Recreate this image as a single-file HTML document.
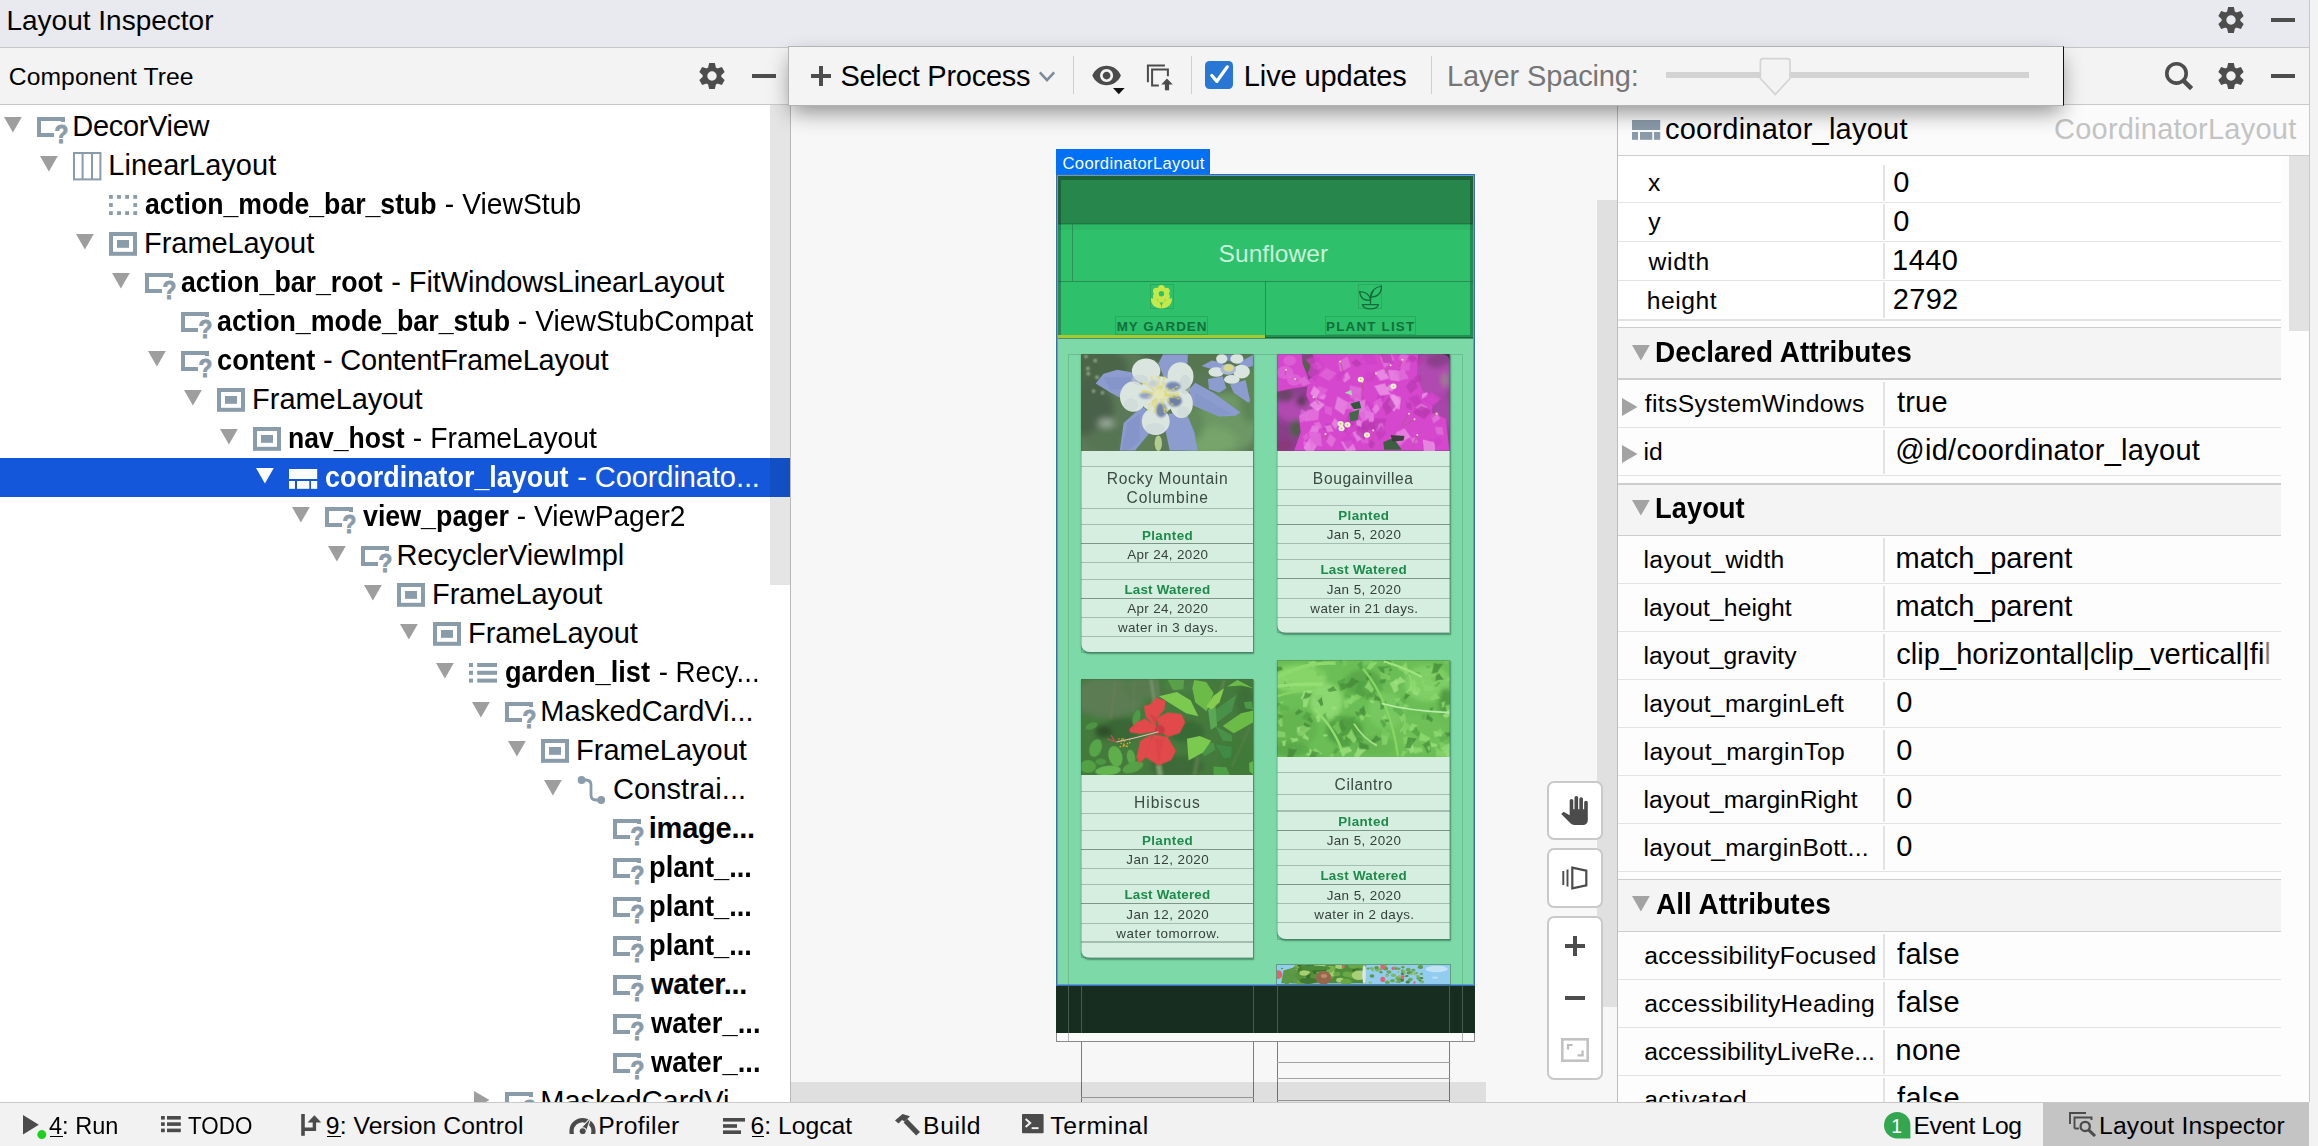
<!DOCTYPE html>
<html><head><meta charset="utf-8"><title>Layout Inspector</title>
<style>
html,body{margin:0;padding:0;}
body{width:2318px;height:1146px;position:relative;overflow:hidden;background:#f7f7f7;font-family:"Liberation Sans", sans-serif;}
div,span,svg{position:absolute;}
span{white-space:pre;line-height:1;}
</style></head><body>
<div style="left:0px;top:0px;width:2318px;height:47px;background:#e8eaef;"></div>
<div style="left:0px;top:47px;width:2318px;height:1px;background:#c6c6c6;"></div>
<span style="left:6.45px;top:7px;font-size:28px;color:#000;">Layout Inspector</span>
<svg style="left:2217px;top:6px;" width="28" height="28" viewBox="0 0 28 28"><g transform="translate(14,14)" fill="#4d4d4d"><path d="M-3.9 -8.4 L-2.8 -13 H2.8 L3.9 -8.4 Z" transform="rotate(0)"/><path d="M-3.9 -8.4 L-2.8 -13 H2.8 L3.9 -8.4 Z" transform="rotate(60)"/><path d="M-3.9 -8.4 L-2.8 -13 H2.8 L3.9 -8.4 Z" transform="rotate(120)"/><path d="M-3.9 -8.4 L-2.8 -13 H2.8 L3.9 -8.4 Z" transform="rotate(180)"/><path d="M-3.9 -8.4 L-2.8 -13 H2.8 L3.9 -8.4 Z" transform="rotate(240)"/><path d="M-3.9 -8.4 L-2.8 -13 H2.8 L3.9 -8.4 Z" transform="rotate(300)"/><circle r="7.05" fill="none" stroke="#4d4d4d" stroke-width="4.7"/></g></svg>
<div style="left:2271px;top:18px;width:24px;height:4px;background:#4d4d4d;"></div>
<div style="left:0px;top:48px;width:2318px;height:56px;background:#f3f3f3;"></div>
<div style="left:0px;top:104px;width:2318px;height:1px;background:#c9c9c9;"></div>
<span style="left:8.75px;top:65px;font-size:24.7px;color:#000;letter-spacing:0.074px;">Component Tree</span>
<svg style="left:697.5px;top:62px;" width="28" height="28" viewBox="0 0 28 28"><g transform="translate(14,14)" fill="#4d4d4d"><path d="M-3.9 -8.4 L-2.8 -13 H2.8 L3.9 -8.4 Z" transform="rotate(0)"/><path d="M-3.9 -8.4 L-2.8 -13 H2.8 L3.9 -8.4 Z" transform="rotate(60)"/><path d="M-3.9 -8.4 L-2.8 -13 H2.8 L3.9 -8.4 Z" transform="rotate(120)"/><path d="M-3.9 -8.4 L-2.8 -13 H2.8 L3.9 -8.4 Z" transform="rotate(180)"/><path d="M-3.9 -8.4 L-2.8 -13 H2.8 L3.9 -8.4 Z" transform="rotate(240)"/><path d="M-3.9 -8.4 L-2.8 -13 H2.8 L3.9 -8.4 Z" transform="rotate(300)"/><circle r="7.05" fill="none" stroke="#4d4d4d" stroke-width="4.7"/></g></svg>
<div style="left:751.5px;top:74px;width:24px;height:4px;background:#4d4d4d;"></div>
<svg style="left:2162px;top:60px;" width="34" height="34" viewBox="0 0 34 34"><circle cx="14.5" cy="13.4" r="9.7" fill="none" stroke="#4d4d4d" stroke-width="3.6"/><path d="M21.2 20.4 L29.6 28.6" stroke="#4d4d4d" stroke-width="4.6"/></svg>
<svg style="left:2217px;top:62px;" width="28" height="28" viewBox="0 0 28 28"><g transform="translate(14,14)" fill="#4d4d4d"><path d="M-3.9 -8.4 L-2.8 -13 H2.8 L3.9 -8.4 Z" transform="rotate(0)"/><path d="M-3.9 -8.4 L-2.8 -13 H2.8 L3.9 -8.4 Z" transform="rotate(60)"/><path d="M-3.9 -8.4 L-2.8 -13 H2.8 L3.9 -8.4 Z" transform="rotate(120)"/><path d="M-3.9 -8.4 L-2.8 -13 H2.8 L3.9 -8.4 Z" transform="rotate(180)"/><path d="M-3.9 -8.4 L-2.8 -13 H2.8 L3.9 -8.4 Z" transform="rotate(240)"/><path d="M-3.9 -8.4 L-2.8 -13 H2.8 L3.9 -8.4 Z" transform="rotate(300)"/><circle r="7.05" fill="none" stroke="#4d4d4d" stroke-width="4.7"/></g></svg>
<div style="left:2271px;top:74px;width:24px;height:4px;background:#4d4d4d;"></div>
<div style="left:0px;top:105px;width:790px;height:997px;background:#ffffff;"></div>
<div style="left:0;top:105px;width:790px;height:997px;overflow:hidden">
<svg style="left:4px;top:12px;" width="18" height="16" viewBox="0 0 18 16"><path d="M0 0 H17.8 L8.9 15.5 Z" fill="#9e9e9e"/></svg>
<svg style="left:37px;top:12px;" width="32" height="28" viewBox="0 0 32 28"><path d="M26 5 V2 H2 V18 H17" fill="none" stroke="#8a9ba9" stroke-width="4"/><text transform="translate(17.4,25.7) scale(0.9,1)" font-family='"Liberation Sans", sans-serif' font-weight="700" font-size="25.2" fill="#8a9ba9" stroke="#8a9ba9" stroke-width="0.9">?</text></svg>
<span style="left:72.37px;top:7px;font-size:29px;color:#000000;letter-spacing:-0.331px;">DecorView</span>
<svg style="left:40px;top:51px;" width="18" height="16" viewBox="0 0 18 16"><path d="M0 0 H17.8 L8.9 15.5 Z" fill="#9e9e9e"/></svg>
<svg style="left:72.8px;top:47px;" width="30" height="30" viewBox="0 0 30 30"><rect x="1" y="1" width="26.4" height="26.4" fill="none" stroke="#8a9ba9" stroke-width="2"/><path d="M9.6 1 V27 M19 1 V27" stroke="#8a9ba9" stroke-width="2"/></svg>
<span style="left:108.32px;top:46px;font-size:29px;color:#000000;letter-spacing:0.019px;">LinearLayout</span>
<svg style="left:109px;top:90px;" width="30" height="22" viewBox="0 0 30 22"><g fill="#8a9ba9"><rect x="0.0" y="0.0" width="3.8" height="3.8"/><rect x="8.1" y="0.0" width="3.8" height="3.8"/><rect x="16.2" y="0.0" width="3.8" height="3.8"/><rect x="24.3" y="0.0" width="3.8" height="3.8"/><rect x="0.0" y="8.1" width="3.8" height="3.8"/><rect x="24.3" y="8.1" width="3.8" height="3.8"/><rect x="0.0" y="16.2" width="3.8" height="3.8"/><rect x="8.1" y="16.2" width="3.8" height="3.8"/><rect x="16.2" y="16.2" width="3.8" height="3.8"/><rect x="24.3" y="16.2" width="3.8" height="3.8"/></g></svg>
<span style="left:145.47px;top:85px;font-size:29px;color:#000000;font-weight:700;transform:scaleX(0.9185);transform-origin:0 0;">action_mode_bar_stub</span>
<span style="left:436.60px;top:85px;font-size:29px;color:#000000;transform:scaleX(0.9758);transform-origin:0 0;"> - ViewStub</span>
<svg style="left:76px;top:129px;" width="18" height="16" viewBox="0 0 18 16"><path d="M0 0 H17.8 L8.9 15.5 Z" fill="#9e9e9e"/></svg>
<svg style="left:109px;top:127.4px;" width="30" height="26" viewBox="0 0 30 26"><rect x="2" y="2" width="24" height="19.8" fill="none" stroke="#8a9ba9" stroke-width="4"/><rect x="8" y="8" width="12" height="7.8" fill="#8a9ba9"/></svg>
<span style="left:144.12px;top:124px;font-size:29px;color:#000000;letter-spacing:-0.077px;">FrameLayout</span>
<svg style="left:112px;top:168px;" width="18" height="16" viewBox="0 0 18 16"><path d="M0 0 H17.8 L8.9 15.5 Z" fill="#9e9e9e"/></svg>
<svg style="left:145px;top:168px;" width="32" height="28" viewBox="0 0 32 28"><path d="M26 5 V2 H2 V18 H17" fill="none" stroke="#8a9ba9" stroke-width="4"/><text transform="translate(17.4,25.7) scale(0.9,1)" font-family='"Liberation Sans", sans-serif' font-weight="700" font-size="25.2" fill="#8a9ba9" stroke="#8a9ba9" stroke-width="0.9">?</text></svg>
<span style="left:181.42px;top:163px;font-size:29px;color:#000000;font-weight:700;transform:scaleX(0.9199);transform-origin:0 0;">action_bar_root</span>
<span style="left:383.30px;top:163px;font-size:29px;color:#000000;letter-spacing:-0.101px;"> - FitWindowsLinearLayout</span>
<svg style="left:181px;top:207px;" width="32" height="28" viewBox="0 0 32 28"><path d="M26 5 V2 H2 V18 H17" fill="none" stroke="#8a9ba9" stroke-width="4"/><text transform="translate(17.4,25.7) scale(0.9,1)" font-family='"Liberation Sans", sans-serif' font-weight="700" font-size="25.2" fill="#8a9ba9" stroke="#8a9ba9" stroke-width="0.9">?</text></svg>
<span style="left:217.02px;top:202px;font-size:29px;color:#000000;font-weight:700;transform:scaleX(0.9231);transform-origin:0 0;">action_mode_bar_stub</span>
<span style="left:509.60px;top:202px;font-size:29px;color:#000000;transform:scaleX(0.9759);transform-origin:0 0;"> - ViewStubCompat</span>
<svg style="left:148px;top:246px;" width="18" height="16" viewBox="0 0 18 16"><path d="M0 0 H17.8 L8.9 15.5 Z" fill="#9e9e9e"/></svg>
<svg style="left:181px;top:246px;" width="32" height="28" viewBox="0 0 32 28"><path d="M26 5 V2 H2 V18 H17" fill="none" stroke="#8a9ba9" stroke-width="4"/><text transform="translate(17.4,25.7) scale(0.9,1)" font-family='"Liberation Sans", sans-serif' font-weight="700" font-size="25.2" fill="#8a9ba9" stroke="#8a9ba9" stroke-width="0.9">?</text></svg>
<span style="left:216.74px;top:241px;font-size:29px;color:#000000;font-weight:700;transform:scaleX(0.9387);transform-origin:0 0;">content</span>
<span style="left:315.30px;top:241px;font-size:29px;color:#000000;letter-spacing:-0.250px;"> - ContentFrameLayout</span>
<svg style="left:184px;top:285px;" width="18" height="16" viewBox="0 0 18 16"><path d="M0 0 H17.8 L8.9 15.5 Z" fill="#9e9e9e"/></svg>
<svg style="left:217px;top:283.4px;" width="30" height="26" viewBox="0 0 30 26"><rect x="2" y="2" width="24" height="19.8" fill="none" stroke="#8a9ba9" stroke-width="4"/><rect x="8" y="8" width="12" height="7.8" fill="#8a9ba9"/></svg>
<span style="left:252.12px;top:280px;font-size:29px;color:#000000;letter-spacing:-0.047px;">FrameLayout</span>
<svg style="left:220px;top:324px;" width="18" height="16" viewBox="0 0 18 16"><path d="M0 0 H17.8 L8.9 15.5 Z" fill="#9e9e9e"/></svg>
<svg style="left:253px;top:322.4px;" width="30" height="26" viewBox="0 0 30 26"><rect x="2" y="2" width="24" height="19.8" fill="none" stroke="#8a9ba9" stroke-width="4"/><rect x="8" y="8" width="12" height="7.8" fill="#8a9ba9"/></svg>
<span style="left:288.05px;top:319px;font-size:29px;color:#000000;font-weight:700;transform:scaleX(0.9155);transform-origin:0 0;">nav_host</span>
<span style="left:404.90px;top:319px;font-size:29px;color:#000000;transform:scaleX(0.9764);transform-origin:0 0;"> - FrameLayout</span>
<div style="left:0px;top:353px;width:790px;height:38.8px;background:#1557db;"></div>
<svg style="left:256px;top:363px;" width="18" height="16" viewBox="0 0 18 16"><path d="M0 0 H17.8 L8.9 15.5 Z" fill="#ffffff"/></svg>
<svg style="left:289px;top:364px;" width="30" height="22" viewBox="0 0 30 22"><g fill="#ffffff"><rect x="0" y="0" width="28.2" height="10"/><rect x="0" y="12" width="6" height="7.8"/><rect x="8" y="12" width="12.3" height="7.8"/><rect x="22" y="12" width="6.2" height="7.8"/></g></svg>
<span style="left:325.45px;top:358px;font-size:29px;color:#ffffff;font-weight:700;transform:scaleX(0.9274);transform-origin:0 0;">coordinator_layout</span>
<span style="left:569.30px;top:358px;font-size:29px;color:#ffffff;letter-spacing:-0.079px;"> - Coordinato...</span>
<svg style="left:292px;top:402px;" width="18" height="16" viewBox="0 0 18 16"><path d="M0 0 H17.8 L8.9 15.5 Z" fill="#9e9e9e"/></svg>
<svg style="left:325px;top:402px;" width="32" height="28" viewBox="0 0 32 28"><path d="M26 5 V2 H2 V18 H17" fill="none" stroke="#8a9ba9" stroke-width="4"/><text transform="translate(17.4,25.7) scale(0.9,1)" font-family='"Liberation Sans", sans-serif' font-weight="700" font-size="25.2" fill="#8a9ba9" stroke="#8a9ba9" stroke-width="0.9">?</text></svg>
<span style="left:362.70px;top:397px;font-size:29px;color:#000000;font-weight:700;transform:scaleX(0.9242);transform-origin:0 0;">view_pager</span>
<span style="left:508.90px;top:397px;font-size:29px;color:#000000;transform:scaleX(0.9719);transform-origin:0 0;"> - ViewPager2</span>
<svg style="left:328px;top:441px;" width="18" height="16" viewBox="0 0 18 16"><path d="M0 0 H17.8 L8.9 15.5 Z" fill="#9e9e9e"/></svg>
<svg style="left:361px;top:441px;" width="32" height="28" viewBox="0 0 32 28"><path d="M26 5 V2 H2 V18 H17" fill="none" stroke="#8a9ba9" stroke-width="4"/><text transform="translate(17.4,25.7) scale(0.9,1)" font-family='"Liberation Sans", sans-serif' font-weight="700" font-size="25.2" fill="#8a9ba9" stroke="#8a9ba9" stroke-width="0.9">?</text></svg>
<span style="left:396.42px;top:436px;font-size:29px;color:#000000;letter-spacing:-0.140px;">RecyclerViewImpl</span>
<svg style="left:364px;top:480px;" width="18" height="16" viewBox="0 0 18 16"><path d="M0 0 H17.8 L8.9 15.5 Z" fill="#9e9e9e"/></svg>
<svg style="left:397px;top:478.4px;" width="30" height="26" viewBox="0 0 30 26"><rect x="2" y="2" width="24" height="19.8" fill="none" stroke="#8a9ba9" stroke-width="4"/><rect x="8" y="8" width="12" height="7.8" fill="#8a9ba9"/></svg>
<span style="left:432.12px;top:475px;font-size:29px;color:#000000;letter-spacing:-0.077px;">FrameLayout</span>
<svg style="left:400px;top:519px;" width="18" height="16" viewBox="0 0 18 16"><path d="M0 0 H17.8 L8.9 15.5 Z" fill="#9e9e9e"/></svg>
<svg style="left:433px;top:517.4px;" width="30" height="26" viewBox="0 0 30 26"><rect x="2" y="2" width="24" height="19.8" fill="none" stroke="#8a9ba9" stroke-width="4"/><rect x="8" y="8" width="12" height="7.8" fill="#8a9ba9"/></svg>
<span style="left:468.12px;top:514px;font-size:29px;color:#000000;letter-spacing:-0.107px;">FrameLayout</span>
<svg style="left:436px;top:558px;" width="18" height="16" viewBox="0 0 18 16"><path d="M0 0 H17.8 L8.9 15.5 Z" fill="#9e9e9e"/></svg>
<svg style="left:469px;top:558px;" width="30" height="22" viewBox="0 0 30 22"><g fill="#8a9ba9"><rect x="0" y="0.0" width="4" height="4"/><rect x="8.2" y="0.0" width="19.8" height="4"/><rect x="0" y="7.8" width="4" height="4"/><rect x="8.2" y="7.8" width="19.8" height="4"/><rect x="0" y="15.6" width="4" height="4"/><rect x="8.2" y="15.6" width="19.8" height="4"/></g></svg>
<span style="left:505.39px;top:553px;font-size:29px;color:#000000;font-weight:700;transform:scaleX(0.9368);transform-origin:0 0;">garden_list</span>
<span style="left:650.60px;top:553px;font-size:29px;color:#000000;transform:scaleX(0.9539);transform-origin:0 0;"> - Recy...</span>
<svg style="left:472px;top:597px;" width="18" height="16" viewBox="0 0 18 16"><path d="M0 0 H17.8 L8.9 15.5 Z" fill="#9e9e9e"/></svg>
<svg style="left:505px;top:597px;" width="32" height="28" viewBox="0 0 32 28"><path d="M26 5 V2 H2 V18 H17" fill="none" stroke="#8a9ba9" stroke-width="4"/><text transform="translate(17.4,25.7) scale(0.9,1)" font-family='"Liberation Sans", sans-serif' font-weight="700" font-size="25.2" fill="#8a9ba9" stroke="#8a9ba9" stroke-width="0.9">?</text></svg>
<span style="left:540.32px;top:592px;font-size:29px;color:#000000;letter-spacing:-0.037px;">MaskedCardVi...</span>
<svg style="left:508px;top:636px;" width="18" height="16" viewBox="0 0 18 16"><path d="M0 0 H17.8 L8.9 15.5 Z" fill="#9e9e9e"/></svg>
<svg style="left:541px;top:634.4px;" width="30" height="26" viewBox="0 0 30 26"><rect x="2" y="2" width="24" height="19.8" fill="none" stroke="#8a9ba9" stroke-width="4"/><rect x="8" y="8" width="12" height="7.8" fill="#8a9ba9"/></svg>
<span style="left:576.12px;top:631px;font-size:29px;color:#000000;letter-spacing:-0.017px;">FrameLayout</span>
<svg style="left:544px;top:675px;" width="18" height="16" viewBox="0 0 18 16"><path d="M0 0 H17.8 L8.9 15.5 Z" fill="#9e9e9e"/></svg>
<svg style="left:576.5px;top:670px;" width="32" height="32" viewBox="0 0 32 32"><path d="M5 5 H9 Q14 5 14 10 V20 Q14 25 19 25 H24" fill="none" stroke="#8a9ba9" stroke-width="2.8"/><circle cx="4.6" cy="5" r="3.9" fill="#8a9ba9"/><circle cx="24.2" cy="25" r="3.9" fill="#8a9ba9"/></svg>
<span style="left:613.03px;top:670px;font-size:29px;color:#000000;letter-spacing:0.095px;">Constrai...</span>
<svg style="left:613px;top:714px;" width="32" height="28" viewBox="0 0 32 28"><path d="M26 5 V2 H2 V18 H17" fill="none" stroke="#8a9ba9" stroke-width="4"/><text transform="translate(17.4,25.7) scale(0.9,1)" font-family='"Liberation Sans", sans-serif' font-weight="700" font-size="25.2" fill="#8a9ba9" stroke="#8a9ba9" stroke-width="0.9">?</text></svg>
<span style="left:648.78px;top:709px;font-size:29px;color:#000000;font-weight:700;letter-spacing:-0.226px;">image...</span>
<svg style="left:613px;top:753px;" width="32" height="28" viewBox="0 0 32 28"><path d="M26 5 V2 H2 V18 H17" fill="none" stroke="#8a9ba9" stroke-width="4"/><text transform="translate(17.4,25.7) scale(0.9,1)" font-family='"Liberation Sans", sans-serif' font-weight="700" font-size="25.2" fill="#8a9ba9" stroke="#8a9ba9" stroke-width="0.9">?</text></svg>
<span style="left:649.01px;top:748px;font-size:29px;color:#000000;font-weight:700;transform:scaleX(0.9388);transform-origin:0 0;">plant_...</span>
<svg style="left:613px;top:792px;" width="32" height="28" viewBox="0 0 32 28"><path d="M26 5 V2 H2 V18 H17" fill="none" stroke="#8a9ba9" stroke-width="4"/><text transform="translate(17.4,25.7) scale(0.9,1)" font-family='"Liberation Sans", sans-serif' font-weight="700" font-size="25.2" fill="#8a9ba9" stroke="#8a9ba9" stroke-width="0.9">?</text></svg>
<span style="left:649.01px;top:787px;font-size:29px;color:#000000;font-weight:700;transform:scaleX(0.9388);transform-origin:0 0;">plant_...</span>
<svg style="left:613px;top:831px;" width="32" height="28" viewBox="0 0 32 28"><path d="M26 5 V2 H2 V18 H17" fill="none" stroke="#8a9ba9" stroke-width="4"/><text transform="translate(17.4,25.7) scale(0.9,1)" font-family='"Liberation Sans", sans-serif' font-weight="700" font-size="25.2" fill="#8a9ba9" stroke="#8a9ba9" stroke-width="0.9">?</text></svg>
<span style="left:649.01px;top:826px;font-size:29px;color:#000000;font-weight:700;transform:scaleX(0.9388);transform-origin:0 0;">plant_...</span>
<svg style="left:613px;top:870px;" width="32" height="28" viewBox="0 0 32 28"><path d="M26 5 V2 H2 V18 H17" fill="none" stroke="#8a9ba9" stroke-width="4"/><text transform="translate(17.4,25.7) scale(0.9,1)" font-family='"Liberation Sans", sans-serif' font-weight="700" font-size="25.2" fill="#8a9ba9" stroke="#8a9ba9" stroke-width="0.9">?</text></svg>
<span style="left:650.88px;top:865px;font-size:29px;color:#000000;font-weight:700;letter-spacing:-0.274px;">water...</span>
<svg style="left:613px;top:909px;" width="32" height="28" viewBox="0 0 32 28"><path d="M26 5 V2 H2 V18 H17" fill="none" stroke="#8a9ba9" stroke-width="4"/><text transform="translate(17.4,25.7) scale(0.9,1)" font-family='"Liberation Sans", sans-serif' font-weight="700" font-size="25.2" fill="#8a9ba9" stroke="#8a9ba9" stroke-width="0.9">?</text></svg>
<span style="left:650.88px;top:904px;font-size:29px;color:#000000;font-weight:700;transform:scaleX(0.9435);transform-origin:0 0;">water_...</span>
<svg style="left:613px;top:948px;" width="32" height="28" viewBox="0 0 32 28"><path d="M26 5 V2 H2 V18 H17" fill="none" stroke="#8a9ba9" stroke-width="4"/><text transform="translate(17.4,25.7) scale(0.9,1)" font-family='"Liberation Sans", sans-serif' font-weight="700" font-size="25.2" fill="#8a9ba9" stroke="#8a9ba9" stroke-width="0.9">?</text></svg>
<span style="left:650.88px;top:943px;font-size:29px;color:#000000;font-weight:700;transform:scaleX(0.9435);transform-origin:0 0;">water_...</span>
<svg style="left:474px;top:985.5px;" width="16" height="18" viewBox="0 0 16 18"><path d="M0 0 V18 L15.5 9 Z" fill="#9e9e9e"/></svg>
<svg style="left:505px;top:987px;" width="32" height="28" viewBox="0 0 32 28"><path d="M26 5 V2 H2 V18 H17" fill="none" stroke="#8a9ba9" stroke-width="4"/><text transform="translate(17.4,25.7) scale(0.9,1)" font-family='"Liberation Sans", sans-serif' font-weight="700" font-size="25.2" fill="#8a9ba9" stroke="#8a9ba9" stroke-width="0.9">?</text></svg>
<span style="left:540.32px;top:982px;font-size:29px;color:#000000;letter-spacing:-0.037px;">MaskedCardVi...</span>
<div style="left:770px;top:0px;width:20px;height:479.5px;background:rgba(0,0,0,0.10);"></div>
</div>
<div style="left:790px;top:105px;width:1px;height:997px;background:#b9b9b9;"></div>
<div style="left:791px;top:105px;width:826px;height:997px;background:#f7f7f7;"></div>
<div style="left:1081px;top:985px;width:1px;height:117px;background:#7c7c7c;"></div>
<div style="left:1253px;top:985px;width:1px;height:117px;background:#7c7c7c;"></div>
<div style="left:1277px;top:985px;width:1px;height:117px;background:#7c7c7c;"></div>
<div style="left:1449px;top:985px;width:1px;height:117px;background:#7c7c7c;"></div>
<div style="left:1277px;top:1062px;width:173px;height:1px;background:#a4a4a4;"></div>
<div style="left:1277px;top:1078px;width:173px;height:1px;background:#a4a4a4;"></div>
<div style="left:1277px;top:1100px;width:173px;height:1px;background:#a4a4a4;"></div>
<div style="left:1081px;top:1097px;width:173px;height:1px;background:#a4a4a4;"></div>
<div style="left:1056.3px;top:1032.6px;width:418.5px;height:9.2px;background:#fbfbfb;box-sizing:border-box;border:1.2px solid #8a8a8a;border-top:none;"></div>
<div style="left:1067.9px;top:1032px;width:1px;height:9px;background:#b5b5b5;"></div>
<div style="left:1461.8px;top:1032px;width:1px;height:9px;background:#b5b5b5;"></div>
<div style="left:1056.3px;top:985px;width:418.5px;height:48px;background:#172d1f;"></div>
<div style="left:1067.9px;top:985px;width:1px;height:48px;background:rgba(255,255,255,0.22);"></div>
<div style="left:1080.5px;top:985px;width:1px;height:48px;background:rgba(255,255,255,0.22);"></div>
<div style="left:1252.8px;top:985px;width:1px;height:48px;background:rgba(255,255,255,0.22);"></div>
<div style="left:1276.8px;top:985px;width:1px;height:48px;background:rgba(255,255,255,0.22);"></div>
<div style="left:1449.0px;top:985px;width:1px;height:48px;background:rgba(255,255,255,0.22);"></div>
<div style="left:1461.8px;top:985px;width:1px;height:48px;background:rgba(255,255,255,0.22);"></div>
<div style="left:1054.8px;top:173.2px;width:421.4px;height:811.8px;background:#ffffff;"></div>
<div style="left:1055.8px;top:174px;width:419.4px;height:811.8px;background:#7dd9a8;box-sizing:border-box;border:1.2px solid #3b6cab;"></div>
<div style="left:1057px;top:175.2px;width:417px;height:809.4px;background:transparent;box-sizing:border-box;border:1px solid #56a0da;"></div>
<div style="left:1058px;top:176px;width:415.2px;height:48.3px;background:#27864b;"></div>
<div style="left:1058px;top:224.3px;width:415.2px;height:114px;background:#2ec06b;"></div>
<div style="left:1058px;top:224.3px;width:415.2px;height:5.6px;background:rgba(0,0,0,0.04);"></div>
<div style="left:1058px;top:222.8px;width:415.2px;height:1.8px;background:rgba(0,40,10,0.16);"></div>
<div style="left:1058px;top:176px;width:415.2px;height:162.4px;background:transparent;box-sizing:border-box;border:3px solid rgba(0,0,0,0.26);border-top-width:4px;"></div>
<div style="left:1058px;top:336.6px;width:415.2px;height:2px;background:rgba(0,60,20,0.45);"></div>
<div style="left:1058px;top:280.8px;width:415.2px;height:1.1px;background:rgba(40,70,50,0.42);"></div>
<div style="left:1264.7px;top:281px;width:1.1px;height:57px;background:rgba(40,70,50,0.42);"></div>
<div style="left:1072.3px;top:224.3px;width:1px;height:56.5px;background:rgba(40,70,50,0.35);"></div>
<div style="left:1058px;top:335.4px;width:207px;height:2.4px;background:#a6c832;"></div>
<span style="left:1218.49px;top:242px;font-size:24.5px;color:#c9f1da;letter-spacing:0.096px;">Sunflower</span>
<span style="left:1116.70px;top:320px;font-size:13.4px;color:#12703a;font-weight:700;letter-spacing:1.026px;">MY GARDEN</span>
<span style="left:1326.10px;top:320px;font-size:13.4px;color:#12703a;font-weight:700;letter-spacing:1.185px;">PLANT LIST</span>
<div style="left:1115.2px;top:316px;width:92.6px;height:19.4px;background:transparent;box-sizing:border-box;border:1px solid rgba(30,90,55,0.24);"></div>
<div style="left:1325px;top:316px;width:91px;height:19.4px;background:transparent;box-sizing:border-box;border:1px solid rgba(30,90,55,0.24);"></div>
<div style="left:1149.5px;top:283.6px;width:24px;height:25.4px;background:transparent;box-sizing:border-box;border:1px solid rgba(30,90,55,0.2);"></div>
<div style="left:1357.5px;top:283.6px;width:24.6px;height:25.4px;background:transparent;box-sizing:border-box;border:1px solid rgba(30,90,55,0.2);"></div>
<svg style="left:1150px;top:284px;" width="23" height="25" viewBox="0 0 23 25"><g fill="#c5e84a"><circle cx="11.4" cy="4.4" r="3.4"/><circle cx="6.4" cy="7.2" r="3.4"/><circle cx="16.4" cy="7.2" r="3.4"/><circle cx="6.4" cy="12.4" r="3.4"/><circle cx="16.4" cy="12.4" r="3.4"/><circle cx="11.4" cy="15.2" r="3.4"/><circle cx="11.4" cy="9.8" r="5"/><path d="M0.8 14.2 C6.8 14.2 11.4 18 11.4 24.4 C5 24.4 0.8 20.4 0.8 14.2 Z"/><path d="M22 14.2 C16 14.2 11.4 18 11.4 24.4 C17.8 24.4 22 20.4 22 14.2 Z"/></g><circle cx="11.4" cy="9.8" r="2.7" fill="#2ec06b"/></svg>
<svg style="left:1357.5px;top:283.6px;" width="25" height="26" viewBox="0 0 25 26"><g fill="none" stroke="#166a3a" stroke-width="1.25"><path d="M12.4 20.5 C12.4 14 13 9.5 15.5 6.5"/><path d="M12.3 13 C12.5 7.5 17 3.2 23.4 2 C23.8 8.4 20 13.4 12.3 13 Z"/><path d="M12.3 16.2 C12 11.2 8 7.8 1.6 7.6 C2.2 13.4 6 16.8 12.3 16.2 Z"/><path d="M4.4 20.6 H20.4 C19.8 23.4 16.6 24.8 12.4 24.8 C8.2 24.8 5 23.4 4.4 20.6 Z"/></g></svg>
<div style="left:1068.2px;top:354px;width:394.6px;height:631px;background:transparent;box-sizing:border-box;border:1px solid rgba(60,120,90,0.28);border-bottom:none;"></div>
<div style="left:1081.1px;top:354.2px;width:172.4px;height:297.90000000000003px;background:#d5eee0;box-shadow:0.8px 1.2px 1.6px rgba(0,40,20,0.4);border-bottom-left-radius:9px 8px;overflow:hidden">
<svg style="left:0px;top:0px" width="172.4" height="96.4" viewBox="55 48 1880 1050" preserveAspectRatio="none"><defs><filter id="b1" x="-20%" y="-20%" width="140%" height="140%"><feGaussianBlur stdDeviation="38"/></filter><filter id="b1s"><feGaussianBlur stdDeviation="9"/></filter><filter id="b1t"><feGaussianBlur stdDeviation="3"/></filter></defs><rect x="0" y="0" width="2000" height="1150" fill="#5b7957"/><g filter="url(#b1)"><ellipse cx="250" cy="200" rx="320" ry="220" fill="#4c6549" /><ellipse cx="150" cy="650" rx="260" ry="300" fill="#4a6148" /><ellipse cx="420" cy="980" rx="300" ry="160" fill="#577553" /><ellipse cx="1650" cy="800" rx="360" ry="330" fill="#6d9865" /><ellipse cx="1450" cy="1000" rx="300" ry="160" fill="#76a46b" /><ellipse cx="1400" cy="120" rx="240" ry="130" fill="#56764f" /><ellipse cx="1900" cy="500" rx="120" ry="300" fill="#5d8556" /><ellipse cx="700" cy="1000" rx="200" ry="150" fill="#5f7f59" /><ellipse cx="1250" cy="800" rx="150" ry="200" fill="#628a5b" /><ellipse cx="330" cy="800" rx="90" ry="40" fill="#a4b3a6" /><ellipse cx="900" cy="60" rx="200" ry="60" fill="#4c634a" /></g><g filter="url(#b1s)" opacity="0.8"><ellipse cx="110" cy="75" rx="17" ry="17" fill="#c3d2ae" /><ellipse cx="210" cy="120" rx="17" ry="17" fill="#c3d2ae" /><ellipse cx="130" cy="205" rx="17" ry="17" fill="#c3d2ae" /><ellipse cx="135" cy="262" rx="17" ry="17" fill="#c3d2ae" /><ellipse cx="192" cy="452" rx="17" ry="17" fill="#c3d2ae" /><ellipse cx="290" cy="470" rx="17" ry="17" fill="#c3d2ae" /><ellipse cx="230" cy="300" rx="17" ry="17" fill="#c3d2ae" /></g><g filter="url(#b1t)"><polygon points="1370,180 1480,120 1600,140 1620,210 1500,220" fill="#8c9cce" /><polygon points="1440,320 1600,290 1640,420 1560,470 1450,430" fill="#8c9cce" /><polygon points="1680,380 1850,330 1900,560 1880,580 1720,470" fill="#8c9cce" /><polygon points="1760,150 1930,60 1930,180 1850,200" fill="#8c9cce" /><polygon points="1610,60 1700,50 1690,130 1640,120" fill="#7a8ac0" /><ellipse cx="1590" cy="100" rx="62" ry="52" fill="#dbe5e0" /><ellipse cx="1755" cy="100" rx="72" ry="55" fill="#dbe5e0" /><ellipse cx="1805" cy="240" rx="92" ry="75" fill="#dbe5e0" /><ellipse cx="1700" cy="325" rx="85" ry="48" fill="#dbe5e0" /><ellipse cx="1530" cy="245" rx="85" ry="52" fill="#dbe5e0" /><ellipse cx="1660" cy="215" rx="85" ry="60" fill="#aab8d6" /><ellipse cx="1665" cy="200" rx="55" ry="40" fill="#d9d98c" /></g><g filter="url(#b1t)"><polygon points="215,370 300,262 450,220 620,250 700,360 560,520 470,520 380,470" fill="#8c9cce" /><polygon points="900,150 950,50 1220,50 1218,140 1100,290 960,310" fill="#8c9cce" /><polygon points="1230,440 1300,360 1500,470 1795,685 1740,722 1560,730 1280,610" fill="#8c9cce" /><polygon points="720,620 520,800 478,1098 645,1098 800,910 830,700" fill="#8c9cce" /><polygon points="1010,700 1200,680 1292,900 1325,1098 1022,1098 980,900" fill="#8c9cce" /><polygon points="300,300 600,300 560,420 380,440" fill="#7a8ac0" opacity="0.35"/><polygon points="560,800 700,700 690,1000 560,1098 500,1098" fill="#7a8ac0" opacity="0.35"/><polygon points="1300,470 1700,700 1560,730 1290,600" fill="#7a8ac0" opacity="0.3"/></g><ellipse cx="898" cy="1020" rx="40" ry="85" fill="#b3cd8e" filter="url(#b1t)"/><g filter="url(#b1t)"><ellipse cx="765" cy="232" rx="155" ry="135" fill="#dbe5e0" /><ellipse cx="1140" cy="292" rx="142" ry="155" fill="#dbe5e0" /><ellipse cx="625" cy="512" rx="145" ry="165" fill="#dbe5e0" /><ellipse cx="1150" cy="590" rx="125" ry="155" fill="#dbe5e0" /><ellipse cx="870" cy="780" rx="152" ry="150" fill="#dbe5e0" /><ellipse cx="900" cy="490" rx="215" ry="200" fill="#dbe5e0" /><ellipse cx="700" cy="330" rx="90" ry="60" fill="#c5d2d2" opacity="0.5"/><ellipse cx="1190" cy="380" rx="60" ry="110" fill="#c5d2d2" opacity="0.5"/><ellipse cx="600" cy="600" rx="80" ry="70" fill="#c5d2d2" opacity="0.45"/><ellipse cx="860" cy="860" rx="110" ry="60" fill="#c5d2d2" opacity="0.45"/><ellipse cx="1170" cy="680" rx="70" ry="60" fill="#c5d2d2" opacity="0.45"/></g><g filter="url(#b1s)" opacity="0.9"><ellipse cx="1060" cy="400" rx="80" ry="50" fill="#6d7fb0" /><ellipse cx="1080" cy="560" rx="75" ry="60" fill="#62749f" /><ellipse cx="930" cy="660" rx="60" ry="80" fill="#6a7ca6" /><ellipse cx="760" cy="500" rx="70" ry="35" fill="#8c9cc4" /><ellipse cx="840" cy="370" rx="50" ry="40" fill="#c3cbd6" /></g><g filter="url(#b1t)"><path d="M905 490 L771 372" stroke="#dcd86e" stroke-width="7" opacity="0.85"/><ellipse cx="771" cy="372" rx="11" ry="9" fill="#e9dc55" /><path d="M905 490 L966 302" stroke="#dcd86e" stroke-width="7" opacity="0.85"/><ellipse cx="966" cy="302" rx="11" ry="9" fill="#e9dc55" /><path d="M905 490 L891 297" stroke="#dcd86e" stroke-width="7" opacity="0.85"/><ellipse cx="891" cy="297" rx="11" ry="9" fill="#e9dc55" /><path d="M905 490 L1047 514" stroke="#dcd86e" stroke-width="7" opacity="0.85"/><ellipse cx="1047" cy="514" rx="11" ry="9" fill="#e9dc55" /><path d="M905 490 L1067 436" stroke="#dcd86e" stroke-width="7" opacity="0.85"/><ellipse cx="1067" cy="436" rx="11" ry="9" fill="#e9dc55" /><path d="M905 490 L979 442" stroke="#dcd86e" stroke-width="7" opacity="0.85"/><ellipse cx="979" cy="442" rx="11" ry="9" fill="#e9dc55" /><path d="M905 490 L796 509" stroke="#dcd86e" stroke-width="7" opacity="0.85"/><ellipse cx="796" cy="509" rx="11" ry="9" fill="#e9dc55" /><path d="M905 490 L750 450" stroke="#dcd86e" stroke-width="7" opacity="0.85"/><ellipse cx="750" cy="450" rx="11" ry="9" fill="#e9dc55" /><path d="M905 490 L1011 498" stroke="#dcd86e" stroke-width="7" opacity="0.85"/><ellipse cx="1011" cy="498" rx="11" ry="9" fill="#e9dc55" /><path d="M905 490 L866 679" stroke="#dcd86e" stroke-width="7" opacity="0.85"/><ellipse cx="866" cy="679" rx="11" ry="9" fill="#e9dc55" /><path d="M905 490 L915 402" stroke="#dcd86e" stroke-width="7" opacity="0.85"/><ellipse cx="915" cy="402" rx="11" ry="9" fill="#e9dc55" /><path d="M905 490 L933 408" stroke="#dcd86e" stroke-width="7" opacity="0.85"/><ellipse cx="933" cy="408" rx="11" ry="9" fill="#e9dc55" /><path d="M905 490 L836 434" stroke="#dcd86e" stroke-width="7" opacity="0.85"/><ellipse cx="836" cy="434" rx="11" ry="9" fill="#e9dc55" /><path d="M905 490 L1111 492" stroke="#dcd86e" stroke-width="7" opacity="0.85"/><ellipse cx="1111" cy="492" rx="11" ry="9" fill="#e9dc55" /><path d="M905 490 L932 583" stroke="#dcd86e" stroke-width="7" opacity="0.85"/><ellipse cx="932" cy="583" rx="11" ry="9" fill="#e9dc55" /><path d="M905 490 L1110 469" stroke="#dcd86e" stroke-width="7" opacity="0.85"/><ellipse cx="1110" cy="469" rx="11" ry="9" fill="#e9dc55" /><path d="M905 490 L851 683" stroke="#dcd86e" stroke-width="7" opacity="0.85"/><ellipse cx="851" cy="683" rx="11" ry="9" fill="#e9dc55" /><path d="M905 490 L734 451" stroke="#dcd86e" stroke-width="7" opacity="0.85"/><ellipse cx="734" cy="451" rx="11" ry="9" fill="#e9dc55" /><path d="M905 490 L966 678" stroke="#dcd86e" stroke-width="7" opacity="0.85"/><ellipse cx="966" cy="678" rx="11" ry="9" fill="#e9dc55" /><path d="M905 490 L825 304" stroke="#dcd86e" stroke-width="7" opacity="0.85"/><ellipse cx="825" cy="304" rx="11" ry="9" fill="#e9dc55" /><path d="M905 490 L998 423" stroke="#dcd86e" stroke-width="7" opacity="0.85"/><ellipse cx="998" cy="423" rx="11" ry="9" fill="#e9dc55" /><path d="M905 490 L841 558" stroke="#dcd86e" stroke-width="7" opacity="0.85"/><ellipse cx="841" cy="558" rx="11" ry="9" fill="#e9dc55" /><path d="M905 490 L956 550" stroke="#dcd86e" stroke-width="7" opacity="0.85"/><ellipse cx="956" cy="550" rx="11" ry="9" fill="#e9dc55" /><path d="M905 490 L853 632" stroke="#dcd86e" stroke-width="7" opacity="0.85"/><ellipse cx="853" cy="632" rx="11" ry="9" fill="#e9dc55" /><path d="M905 490 L1082 493" stroke="#dcd86e" stroke-width="7" opacity="0.85"/><ellipse cx="1082" cy="493" rx="11" ry="9" fill="#e9dc55" /><path d="M905 490 L842 583" stroke="#dcd86e" stroke-width="7" opacity="0.85"/><ellipse cx="842" cy="583" rx="11" ry="9" fill="#e9dc55" /><path d="M905 490 L966 369" stroke="#dcd86e" stroke-width="7" opacity="0.85"/><ellipse cx="966" cy="369" rx="11" ry="9" fill="#e9dc55" /><path d="M905 490 L846 612" stroke="#dcd86e" stroke-width="7" opacity="0.85"/><ellipse cx="846" cy="612" rx="11" ry="9" fill="#e9dc55" /><path d="M905 490 L882 419" stroke="#dcd86e" stroke-width="7" opacity="0.85"/><ellipse cx="882" cy="419" rx="11" ry="9" fill="#e9dc55" /><path d="M905 490 L981 479" stroke="#dcd86e" stroke-width="7" opacity="0.85"/><ellipse cx="981" cy="479" rx="11" ry="9" fill="#e9dc55" /><path d="M905 490 L905 307" stroke="#dcd86e" stroke-width="7" opacity="0.85"/><ellipse cx="905" cy="307" rx="11" ry="9" fill="#e9dc55" /><path d="M905 490 L1097 510" stroke="#dcd86e" stroke-width="7" opacity="0.85"/><ellipse cx="1097" cy="510" rx="11" ry="9" fill="#e9dc55" /><path d="M905 490 L797 599" stroke="#dcd86e" stroke-width="7" opacity="0.85"/><ellipse cx="797" cy="599" rx="11" ry="9" fill="#e9dc55" /><path d="M905 490 L985 494" stroke="#dcd86e" stroke-width="7" opacity="0.85"/><ellipse cx="985" cy="494" rx="11" ry="9" fill="#e9dc55" /><path d="M905 490 L997 670" stroke="#dcd86e" stroke-width="7" opacity="0.85"/><ellipse cx="997" cy="670" rx="11" ry="9" fill="#e9dc55" /><path d="M905 490 L967 651" stroke="#dcd86e" stroke-width="7" opacity="0.85"/><ellipse cx="967" cy="651" rx="11" ry="9" fill="#e9dc55" /><path d="M905 490 L1101 406" stroke="#dcd86e" stroke-width="7" opacity="0.85"/><ellipse cx="1101" cy="406" rx="11" ry="9" fill="#e9dc55" /><path d="M905 490 L834 586" stroke="#dcd86e" stroke-width="7" opacity="0.85"/><ellipse cx="834" cy="586" rx="11" ry="9" fill="#e9dc55" /><path d="M905 490 L716 463" stroke="#dcd86e" stroke-width="7" opacity="0.85"/><ellipse cx="716" cy="463" rx="11" ry="9" fill="#e9dc55" /><path d="M905 490 L1051 596" stroke="#dcd86e" stroke-width="7" opacity="0.85"/><ellipse cx="1051" cy="596" rx="11" ry="9" fill="#e9dc55" /><path d="M905 490 L965 313" stroke="#dcd86e" stroke-width="7" opacity="0.85"/><ellipse cx="965" cy="313" rx="11" ry="9" fill="#e9dc55" /><path d="M905 490 L1117 535" stroke="#dcd86e" stroke-width="7" opacity="0.85"/><ellipse cx="1117" cy="535" rx="11" ry="9" fill="#e9dc55" /><path d="M905 490 L1010 551" stroke="#dcd86e" stroke-width="7" opacity="0.85"/><ellipse cx="1010" cy="551" rx="11" ry="9" fill="#e9dc55" /><path d="M905 490 L741 366" stroke="#dcd86e" stroke-width="7" opacity="0.85"/><ellipse cx="741" cy="366" rx="11" ry="9" fill="#e9dc55" /><path d="M905 490 L790 654" stroke="#dcd86e" stroke-width="7" opacity="0.85"/><ellipse cx="790" cy="654" rx="11" ry="9" fill="#e9dc55" /><path d="M905 490 L789 459" stroke="#dcd86e" stroke-width="7" opacity="0.85"/><ellipse cx="789" cy="459" rx="11" ry="9" fill="#e9dc55" /><ellipse cx="905" cy="490" rx="60" ry="55" fill="#e4e6b4" /></g></svg>
<div style="left:0px;top:112.14999999999999px;width:172.4px;height:1.1px;background:rgba(95,125,110,0.42);"></div>
<div style="left:0px;top:153.35000000000002px;width:172.4px;height:1.1px;background:rgba(95,125,110,0.42);"></div>
<div style="left:0px;top:169.35000000000002px;width:172.4px;height:1.1px;background:rgba(95,125,110,0.42);"></div>
<div style="left:0px;top:188.54999999999995px;width:172.4px;height:1.1px;background:rgba(70,95,82,0.62);"></div>
<div style="left:0px;top:207.54999999999995px;width:172.4px;height:1.1px;background:rgba(95,125,110,0.42);"></div>
<div style="left:0px;top:224.45000000000005px;width:172.4px;height:1.1px;background:rgba(95,125,110,0.42);"></div>
<div style="left:0px;top:243.64999999999998px;width:172.4px;height:1.1px;background:rgba(70,95,82,0.62);"></div>
<div style="left:0px;top:262.85px;width:172.4px;height:1.1px;background:rgba(95,125,110,0.42);"></div>
<div style="left:0px;top:282.04999999999995px;width:172.4px;height:1.1px;background:rgba(95,125,110,0.42);"></div>
</div>
<div style="left:1080.6px;top:353.7px;width:173.4px;height:298.90000000000003px;background:transparent;box-sizing:border-box;border:0.8px solid rgba(60,100,80,0.3);"></div>
<span style="left:1106.72px;top:471px;font-size:15.6px;color:#3b4a42;letter-spacing:0.698px;">Rocky Mountain</span>
<span style="left:1126.61px;top:490px;font-size:15.6px;color:#3b4a42;letter-spacing:0.842px;">Columbine</span>
<span style="left:1141.90px;top:529px;font-size:13.4px;color:#1e8a4b;font-weight:700;letter-spacing:0.401px;">Planted</span>
<span style="left:1127.17px;top:548px;font-size:13.4px;color:#36403a;letter-spacing:0.369px;">Apr 24, 2020</span>
<span style="left:1124.40px;top:583px;font-size:13.4px;color:#1e8a4b;font-weight:700;letter-spacing:0.199px;">Last Watered</span>
<span style="left:1127.17px;top:602px;font-size:13.4px;color:#36403a;letter-spacing:0.369px;">Apr 24, 2020</span>
<span style="left:1117.92px;top:621px;font-size:13.4px;color:#36403a;letter-spacing:0.415px;">water in 3 days.</span>
<div style="left:1277.4px;top:354.2px;width:172.4px;height:278.7px;background:#d5eee0;box-shadow:0.8px 1.2px 1.6px rgba(0,40,20,0.4);border-bottom-left-radius:9px 8px;overflow:hidden">
<svg style="left:0px;top:0px" width="172.4" height="96.4" viewBox="62 48 1878 1050" preserveAspectRatio="none"><defs><filter id="b2" x="-20%" y="-20%" width="140%" height="140%"><feGaussianBlur stdDeviation="30"/></filter><filter id="b2t"><feGaussianBlur stdDeviation="4"/></filter></defs><rect x="0" y="0" width="2000" height="1150" fill="#8e3f90"/><g filter="url(#b2)"><ellipse cx="250" cy="640" rx="210" ry="150" fill="#b04ab0" /><ellipse cx="150" cy="500" rx="100" ry="70" fill="#6a4468" /><ellipse cx="140" cy="960" rx="130" ry="150" fill="#8a3c88" /><ellipse cx="270" cy="860" rx="70" ry="100" fill="#4f5e4c" /><ellipse cx="385" cy="180" rx="90" ry="80" fill="#55604e" /><ellipse cx="1750" cy="300" rx="220" ry="280" fill="#b048b0" /><ellipse cx="1850" cy="700" rx="120" ry="220" fill="#a844a8" /><ellipse cx="1800" cy="120" rx="120" ry="80" fill="#8a3f8a" /><ellipse cx="1890" cy="330" rx="36" ry="80" fill="#98808c" /><ellipse cx="120" cy="1050" rx="120" ry="60" fill="#8a3878" /><ellipse cx="330" cy="560" rx="60" ry="60" fill="#5e3a5c" /></g><g filter="url(#b2t)"><polygon points="450,48 1600,48 1585,300 1650,450 1765,500 1750,690 1900,750 1940,1098 250,1098 320,900 300,720 450,640 380,500 400,330 520,250" fill="#d546cd" /><polygon points="62,48 330,48 340,150 400,300 390,400 200,430 62,460" fill="#d546cd" /></g><g filter="url(#b2t)"><polygon points="926,635 1031,562 1136,656 1031,719" fill="#cf40c8" opacity="0.75" transform="rotate(81 1031 635)"/><polygon points="1491,551 1576,491 1661,568 1576,618" fill="#c23bbb" opacity="0.75" transform="rotate(17 1576 551)"/><polygon points="703,162 800,93 898,181 800,240" fill="#e274dc" opacity="0.75" transform="rotate(107 800 162)"/><polygon points="851,528 944,462 1037,546 944,602" fill="#c23bbb" opacity="0.75" transform="rotate(112 944 528)"/><polygon points="1572,134 1619,101 1666,143 1619,172" fill="#b838b0" opacity="0.75" transform="rotate(108 1619 134)"/><polygon points="1453,400 1536,341 1619,416 1536,466" fill="#b838b0" opacity="0.75" transform="rotate(93 1536 400)"/><polygon points="1234,575 1322,513 1411,592 1322,645" fill="#cf40c8" opacity="0.75" transform="rotate(118 1322 575)"/><polygon points="855,627 961,553 1066,648 961,711" fill="#ea8ee6" opacity="0.75" transform="rotate(127 961 627)"/><polygon points="755,302 819,257 882,315 819,353" fill="#ea8ee6" opacity="0.75" transform="rotate(101 819 302)"/><polygon points="433,179 497,134 561,192 497,230" fill="#ea8ee6" opacity="0.75" transform="rotate(172 497 179)"/><polygon points="580,989 655,936 731,1004 655,1050" fill="#e478de" opacity="0.75" transform="rotate(76 655 989)"/><polygon points="1119,270 1208,208 1297,288 1208,342" fill="#ee9cea" opacity="0.75" transform="rotate(16 1208 270)"/><polygon points="751,1044 846,978 940,1063 846,1119" fill="#ea8ee6" opacity="0.75" transform="rotate(24 846 1044)"/><polygon points="1351,81 1426,28 1501,96 1426,141" fill="#cf40c8" opacity="0.75" transform="rotate(32 1426 81)"/><polygon points="1140,522 1197,482 1254,533 1197,568" fill="#c23bbb" opacity="0.75" transform="rotate(75 1197 522)"/><polygon points="815,469 925,392 1034,491 925,556" fill="#e274dc" opacity="0.75" transform="rotate(49 925 469)"/><polygon points="1770,881 1835,836 1900,894 1835,933" fill="#e274dc" opacity="0.75" transform="rotate(38 1835 881)"/><polygon points="854,933 941,872 1028,950 941,1002" fill="#ea8ee6" opacity="0.75" transform="rotate(8 941 933)"/><polygon points="511,516 557,484 602,525 557,552" fill="#ee9cea" opacity="0.75" transform="rotate(149 557 516)"/><polygon points="870,145 929,104 987,157 929,192" fill="#b838b0" opacity="0.75" transform="rotate(3 929 145)"/><polygon points="848,698 901,661 955,709 901,741" fill="#cf40c8" opacity="0.75" transform="rotate(150 901 698)"/><polygon points="455,460 540,400 626,477 540,529" fill="#e066d8" opacity="0.75" transform="rotate(164 540 460)"/><polygon points="1540,322 1598,282 1655,333 1598,368" fill="#b838b0" opacity="0.75" transform="rotate(124 1598 322)"/><polygon points="882,557 932,522 982,567 932,597" fill="#e274dc" opacity="0.75" transform="rotate(19 932 557)"/><polygon points="329,1042 390,1000 450,1054 390,1091" fill="#e478de" opacity="0.75" transform="rotate(46 390 1042)"/><polygon points="1543,672 1607,628 1671,685 1607,724" fill="#c23bbb" opacity="0.75" transform="rotate(167 1607 672)"/><polygon points="988,730 1073,671 1158,747 1073,798" fill="#ea8ee6" opacity="0.75" transform="rotate(50 1073 730)"/><polygon points="282,342 356,290 430,357 356,401" fill="#e274dc" opacity="0.75" transform="rotate(8 356 342)"/><polygon points="659,606 767,531 875,628 767,693" fill="#ea8ee6" opacity="0.75" transform="rotate(65 767 606)"/><polygon points="1623,1060 1711,999 1799,1078 1711,1130" fill="#c23bbb" opacity="0.75" transform="rotate(106 1711 1060)"/><polygon points="1693,550 1762,502 1830,563 1762,604" fill="#e066d8" opacity="0.75" transform="rotate(173 1762 550)"/><polygon points="287,713 363,659 439,728 363,774" fill="#e066d8" opacity="0.75" transform="rotate(57 363 713)"/><polygon points="1073,814 1176,742 1280,835 1176,897" fill="#c23bbb" opacity="0.75" transform="rotate(143 1176 814)"/><polygon points="1290,980 1392,909 1494,1000 1392,1061" fill="#e478de" opacity="0.75" transform="rotate(170 1392 980)"/><polygon points="283,739 353,690 422,753 353,795" fill="#e274dc" opacity="0.75" transform="rotate(110 353 739)"/><polygon points="345,716 454,639 564,738 454,803" fill="#e478de" opacity="0.75" transform="rotate(131 454 716)"/><polygon points="849,812 932,754 1015,829 932,879" fill="#cf40c8" opacity="0.75" transform="rotate(83 932 812)"/><polygon points="1090,594 1169,539 1247,610 1169,657" fill="#e066d8" opacity="0.75" transform="rotate(108 1169 594)"/><polygon points="985,303 1075,239 1166,321 1075,375" fill="#cf40c8" opacity="0.75" transform="rotate(140 1075 303)"/><polygon points="1250,561 1353,489 1456,582 1353,644" fill="#ee9cea" opacity="0.75" transform="rotate(54 1353 561)"/><polygon points="1325,275 1381,235 1437,286 1381,319" fill="#ee9cea" opacity="0.75" transform="rotate(119 1381 275)"/><polygon points="949,971 1015,924 1081,984 1015,1024" fill="#e066d8" opacity="0.75" transform="rotate(36 1015 971)"/><polygon points="893,884 998,811 1102,905 998,968" fill="#b838b0" opacity="0.75" transform="rotate(69 998 884)"/><polygon points="1180,390 1234,352 1288,400 1234,433" fill="#cf40c8" opacity="0.75" transform="rotate(63 1234 390)"/><polygon points="331,1060 429,991 528,1080 429,1139" fill="#ea8ee6" opacity="0.75" transform="rotate(81 429 1060)"/><polygon points="685,286 757,236 828,301 757,344" fill="#cf40c8" opacity="0.75" transform="rotate(121 757 286)"/><polygon points="1355,920 1440,860 1526,937 1440,989" fill="#ee9cea" opacity="0.75" transform="rotate(13 1440 920)"/><polygon points="331,952 379,918 426,961 379,990" fill="#e066d8" opacity="0.75" transform="rotate(103 379 952)"/><polygon points="763,869 809,837 855,879 809,906" fill="#c23bbb" opacity="0.75" transform="rotate(73 809 869)"/><polygon points="562,847 624,803 687,859 624,897" fill="#c23bbb" opacity="0.75" transform="rotate(143 624 847)"/><polygon points="412,611 499,550 586,628 499,680" fill="#ee9cea" opacity="0.75" transform="rotate(173 499 611)"/><polygon points="1315,271 1391,218 1467,287 1391,332" fill="#c23bbb" opacity="0.75" transform="rotate(129 1391 271)"/><polygon points="1453,610 1500,577 1548,620 1500,648" fill="#b838b0" opacity="0.75" transform="rotate(49 1500 610)"/><polygon points="787,774 866,719 945,790 866,837" fill="#c23bbb" opacity="0.75" transform="rotate(71 866 774)"/><polygon points="1507,985 1557,950 1608,995 1557,1026" fill="#e478de" opacity="0.75" transform="rotate(23 1557 985)"/><polygon points="929,702 1033,629 1137,723 1033,785" fill="#e478de" opacity="0.75" transform="rotate(99 1033 702)"/><polygon points="1243,578 1342,509 1440,597 1342,656" fill="#ee9cea" opacity="0.75" transform="rotate(83 1342 578)"/><polygon points="1248,277 1340,213 1431,295 1340,350" fill="#ea8ee6" opacity="0.75" transform="rotate(38 1340 277)"/><polygon points="1616,1060 1725,984 1834,1082 1725,1147" fill="#ee9cea" opacity="0.75" transform="rotate(47 1725 1060)"/><polygon points="1366,86 1443,31 1521,101 1443,148" fill="#e274dc" opacity="0.75" transform="rotate(79 1443 86)"/><polygon points="1106,846 1183,792 1260,861 1183,907" fill="#e274dc" opacity="0.75" transform="rotate(39 1183 846)"/><polygon points="1627,503 1675,470 1722,513 1675,541" fill="#ee9cea" opacity="0.75" transform="rotate(124 1675 503)"/><polygon points="1640,545 1750,468 1860,567 1750,633" fill="#cf40c8" opacity="0.75" transform="rotate(170 1750 545)"/><polygon points="1043,1029 1094,993 1144,1039 1094,1069" fill="#b838b0" opacity="0.75" transform="rotate(79 1094 1029)"/><polygon points="1115,909 1196,852 1278,926 1196,975" fill="#c23bbb" opacity="0.75" transform="rotate(94 1196 909)"/><polygon points="1572,636 1638,590 1703,649 1638,688" fill="#e478de" opacity="0.75" transform="rotate(172 1638 636)"/><polygon points="1614,686 1679,640 1743,698 1679,737" fill="#c23bbb" opacity="0.75" transform="rotate(174 1679 686)"/><polygon points="1084,649 1143,608 1201,660 1143,695" fill="#ea8ee6" opacity="0.75" transform="rotate(91 1143 649)"/><polygon points="1160,98 1268,22 1376,120 1268,184" fill="#e478de" opacity="0.75" transform="rotate(98 1268 98)"/><polygon points="369,238 474,165 580,260 474,323" fill="#cf40c8" opacity="0.75" transform="rotate(74 474 238)"/><polygon points="1751,1003 1813,959 1876,1015 1813,1053" fill="#cf40c8" opacity="0.75" transform="rotate(89 1813 1003)"/><polygon points="751,980 857,906 962,1001 857,1065" fill="#cf40c8" opacity="0.75" transform="rotate(94 857 980)"/><polygon points="451,494 498,461 545,503 498,531" fill="#e066d8" opacity="0.75" transform="rotate(23 498 494)"/><polygon points="1480,93 1538,53 1596,105 1538,139" fill="#b838b0" opacity="0.75" transform="rotate(2 1538 93)"/><polygon points="709,801 770,758 831,813 770,850" fill="#cf40c8" opacity="0.75" transform="rotate(19 770 801)"/><polygon points="1385,194 1463,139 1541,210 1463,257" fill="#e066d8" opacity="0.75" transform="rotate(129 1463 194)"/><polygon points="1371,958 1417,925 1464,967 1417,995" fill="#e478de" opacity="0.75" transform="rotate(149 1417 958)"/><polygon points="1183,614 1284,543 1386,634 1284,694" fill="#b838b0" opacity="0.75" transform="rotate(95 1284 614)"/><polygon points="1549,688 1649,617 1750,708 1649,768" fill="#b838b0" opacity="0.75" transform="rotate(165 1649 688)"/><polygon points="1246,421 1303,381 1360,432 1303,466" fill="#ee9cea" opacity="0.75" transform="rotate(160 1303 421)"/><polygon points="574,856 632,816 689,868 632,902" fill="#ea8ee6" opacity="0.75" transform="rotate(24 632 856)"/><polygon points="639,804 701,761 763,816 701,853" fill="#ea8ee6" opacity="0.75" transform="rotate(78 701 804)"/><polygon points="1337,273 1423,213 1508,290 1423,341" fill="#e274dc" opacity="0.75" transform="rotate(17 1423 273)"/><polygon points="1115,431 1213,362 1312,451 1213,510" fill="#ee9cea" opacity="0.75" transform="rotate(21 1213 431)"/><polygon points="1036,836 1114,781 1191,851 1114,898" fill="#b838b0" opacity="0.75" transform="rotate(145 1114 836)"/><polygon points="983,95 1077,28 1172,113 1077,170" fill="#cf40c8" opacity="0.75" transform="rotate(26 1077 95)"/><polygon points="516,276 616,206 716,296 616,356" fill="#e066d8" opacity="0.75" transform="rotate(167 616 276)"/><polygon points="371,133 478,58 584,154 478,218" fill="#cf40c8" opacity="0.75" transform="rotate(14 478 133)"/><polygon points="407,465 480,414 553,479 480,523" fill="#ee9cea" opacity="0.75" transform="rotate(77 480 465)"/><polygon points="1171,83 1261,20 1352,101 1261,156" fill="#b838b0" opacity="0.75" transform="rotate(33 1261 83)"/><polygon points="962,817 1034,767 1105,831 1034,874" fill="#b838b0" opacity="0.75" transform="rotate(109 1034 817)"/><polygon points="411,870 477,824 543,883 477,923" fill="#ea8ee6" opacity="0.75" transform="rotate(144 477 870)"/><polygon points="1336,939 1422,879 1508,957 1422,1008" fill="#e478de" opacity="0.75" transform="rotate(103 1422 939)"/><polygon points="559,660 626,613 693,674 626,714" fill="#e066d8" opacity="0.75" transform="rotate(50 626 660)"/><polygon points="455,820 510,782 566,831 510,865" fill="#e478de" opacity="0.75" transform="rotate(24 510 820)"/><polygon points="772,614 841,566 910,628 841,669" fill="#e478de" opacity="0.75" transform="rotate(138 841 614)"/><polygon points="909,800 959,765 1008,810 959,840" fill="#ee9cea" opacity="0.75" transform="rotate(54 959 800)"/><polygon points="377,967 486,890 596,989 486,1054" fill="#e274dc" opacity="0.75" transform="rotate(42 486 967)"/><polygon points="1727,743 1794,696 1861,756 1794,796" fill="#e478de" opacity="0.75" transform="rotate(103 1794 743)"/><ellipse cx="150" cy="250" rx="90" ry="72.0" fill="#e06ada" opacity="0.7"/><ellipse cx="250" cy="330" rx="80" ry="64.0" fill="#e06ada" opacity="0.7"/><ellipse cx="200" cy="120" rx="70" ry="56.0" fill="#e06ada" opacity="0.7"/></g><g filter="url(#b2t)"><polygon points="850,690 960,650 940,770 860,780" fill="#3f6b45" /><polygon points="1220,1010 1330,960 1420,1090 1230,1090" fill="#3a5f40" /><polygon points="860,590 960,560 980,640 900,650" fill="#2f5a38" /><polygon points="1300,930 1450,940 1440,990 1320,1000" fill="#3b3f3a" /><polygon points="800,470 870,440 880,500" fill="#a8d8b0" /></g><g filter="url(#b2t)"><ellipse cx="755" cy="808" rx="33" ry="30" fill="#f3efd0" /><ellipse cx="755" cy="808" rx="9" ry="9" fill="#d8c040" /><ellipse cx="830" cy="820" rx="33" ry="30" fill="#f3efd0" /><ellipse cx="830" cy="820" rx="9" ry="9" fill="#d8c040" /><ellipse cx="765" cy="860" rx="33" ry="30" fill="#f3efd0" /><ellipse cx="765" cy="860" rx="9" ry="9" fill="#d8c040" /><ellipse cx="1042" cy="930" rx="33" ry="30" fill="#f3efd0" /><ellipse cx="1042" cy="930" rx="9" ry="9" fill="#d8c040" /><ellipse cx="1330" cy="400" rx="33" ry="30" fill="#f3efd0" /><ellipse cx="1330" cy="400" rx="9" ry="9" fill="#d8c040" /><ellipse cx="975" cy="325" rx="33" ry="30" fill="#f3efd0" /><ellipse cx="975" cy="325" rx="9" ry="9" fill="#d8c040" /><path d="M750 130 L790 250" stroke="#b05a86" stroke-width="9"/><ellipse cx="750" cy="130" rx="11" ry="11" fill="#eee0b0" /><path d="M1430 110 L1390 190" stroke="#b05a86" stroke-width="9"/><ellipse cx="1430" cy="110" rx="11" ry="11" fill="#eee0b0" /><path d="M1140 260 L1080 330" stroke="#b05a86" stroke-width="9"/><ellipse cx="1140" cy="260" rx="11" ry="11" fill="#eee0b0" /><path d="M990 350 L1000 450" stroke="#b05a86" stroke-width="9"/><ellipse cx="990" cy="350" rx="11" ry="11" fill="#eee0b0" /><path d="M1300 170 L1240 260" stroke="#b05a86" stroke-width="9"/><ellipse cx="1300" cy="170" rx="11" ry="11" fill="#eee0b0" /><path d="M1500 700 L1420 820" stroke="#b05a86" stroke-width="9"/><ellipse cx="1500" cy="700" rx="11" ry="11" fill="#eee0b0" /><path d="M1110 880 L1110 1000" stroke="#b05a86" stroke-width="9"/><ellipse cx="1110" cy="880" rx="11" ry="11" fill="#eee0b0" /><path d="M460 520 L520 600" stroke="#b05a86" stroke-width="9"/><ellipse cx="460" cy="520" rx="11" ry="11" fill="#eee0b0" /><path d="M1560 760 L1430 840" stroke="#b05a86" stroke-width="9"/><ellipse cx="1560" cy="760" rx="11" ry="11" fill="#eee0b0" /><path d="M160 220 L150 280" stroke="#b05a86" stroke-width="9"/><ellipse cx="160" cy="220" rx="11" ry="11" fill="#eee0b0" /><path d="M260 320 L300 340" stroke="#b05a86" stroke-width="9"/><ellipse cx="260" cy="320" rx="11" ry="11" fill="#eee0b0" /><path d="M1800 700 L1750 740" stroke="#b05a86" stroke-width="9"/><ellipse cx="1800" cy="700" rx="11" ry="11" fill="#eee0b0" /><path d="M590 920 L610 980" stroke="#b05a86" stroke-width="9"/><ellipse cx="590" cy="920" rx="11" ry="11" fill="#eee0b0" /><path d="M1590 930 L1540 1060" stroke="#b05a86" stroke-width="9"/><ellipse cx="1590" cy="930" rx="11" ry="11" fill="#eee0b0" /></g><path d="M1860 48 H1940 V120 Q1935 55 1860 48 Z" fill="#4a2a4c"/></svg>
<div style="left:0px;top:112.14999999999999px;width:172.4px;height:1.1px;background:rgba(95,125,110,0.42);"></div>
<div style="left:0px;top:134.75px;width:172.4px;height:1.1px;background:rgba(95,125,110,0.42);"></div>
<div style="left:0px;top:150.55px;width:172.4px;height:1.1px;background:rgba(95,125,110,0.42);"></div>
<div style="left:0px;top:169.35000000000002px;width:172.4px;height:1.1px;background:rgba(70,95,82,0.62);"></div>
<div style="left:0px;top:188.54999999999995px;width:172.4px;height:1.1px;background:rgba(95,125,110,0.42);"></div>
<div style="left:0px;top:204.64999999999998px;width:172.4px;height:1.1px;background:rgba(95,125,110,0.42);"></div>
<div style="left:0px;top:224.04999999999995px;width:172.4px;height:1.1px;background:rgba(70,95,82,0.62);"></div>
<div style="left:0px;top:243.64999999999998px;width:172.4px;height:1.1px;background:rgba(95,125,110,0.42);"></div>
<div style="left:0px;top:262.85px;width:172.4px;height:1.1px;background:rgba(95,125,110,0.42);"></div>
</div>
<div style="left:1276.9px;top:353.7px;width:173.4px;height:279.7px;background:transparent;box-sizing:border-box;border:0.8px solid rgba(60,100,80,0.3);"></div>
<span style="left:1312.87px;top:471px;font-size:15.6px;color:#3b4a42;letter-spacing:0.618px;">Bougainvillea</span>
<span style="left:1338.20px;top:509px;font-size:13.4px;color:#1e8a4b;font-weight:700;letter-spacing:0.401px;">Planted</span>
<span style="left:1326.64px;top:528px;font-size:13.4px;color:#36403a;letter-spacing:0.423px;">Jan 5, 2020</span>
<span style="left:1320.45px;top:563px;font-size:13.4px;color:#1e8a4b;font-weight:700;letter-spacing:0.244px;">Last Watered</span>
<span style="left:1326.64px;top:583px;font-size:13.4px;color:#36403a;letter-spacing:0.423px;">Jan 5, 2020</span>
<span style="left:1310.37px;top:602px;font-size:13.4px;color:#36403a;letter-spacing:0.404px;">water in 21 days.</span>
<div style="left:1081.1px;top:679.0px;width:172.4px;height:278.9px;background:#d5eee0;box-shadow:0.8px 1.2px 1.6px rgba(0,40,20,0.4);border-bottom-left-radius:9px 8px;overflow:hidden">
<svg style="left:0px;top:0px" width="172.4" height="96.4" viewBox="55 48 1880 1050" preserveAspectRatio="none"><defs><filter id="b3" x="-20%" y="-20%" width="140%" height="140%"><feGaussianBlur stdDeviation="30"/></filter><filter id="b3t"><feGaussianBlur stdDeviation="3.5"/></filter><filter id="b3m"><feGaussianBlur stdDeviation="10"/></filter></defs><rect x="0" y="0" width="2000" height="1150" fill="#457a3d"/><g filter="url(#b3)"><ellipse cx="350" cy="250" rx="400" ry="220" fill="#5b7c52" /><ellipse cx="700" cy="150" rx="200" ry="120" fill="#587a50" /><ellipse cx="500" cy="600" rx="200" ry="130" fill="#3a6636" /><ellipse cx="300" cy="620" rx="90" ry="70" fill="#2d4f2c" /><ellipse cx="1100" cy="1000" rx="300" ry="120" fill="#3d6b37" /><ellipse cx="1200" cy="620" rx="200" ry="120" fill="#386a35" /><ellipse cx="1750" cy="900" rx="200" ry="200" fill="#3f7a38" /><ellipse cx="1150" cy="120" rx="200" ry="90" fill="#4a8045" /><ellipse cx="1850" cy="300" rx="100" ry="200" fill="#3e7038" /></g><g filter="url(#b3m)" opacity="0.8"><path d="M820 48 L860 320" stroke="#7c9470" stroke-width="42"/><path d="M880 48 L900 250" stroke="#6a8562" stroke-width="30"/><path d="M430 60 L380 480" stroke="#6a7f5f" stroke-width="22"/><path d="M640 60 L620 420" stroke="#66805c" stroke-width="18"/><path d="M900 980 L920 1098" stroke="#8aa878" stroke-width="60"/><path d="M1330 900 L1290 1098" stroke="#5e7e50" stroke-width="50"/><path d="M1620 48 L1540 300" stroke="#6e8a5c" stroke-width="22"/><path d="M1900 560 L1700 1000" stroke="#6a8058" stroke-width="14"/><path d="M1240 60 L920 210" stroke="#5a7048" stroke-width="12"/></g><g filter="url(#b3t)"><ellipse cx="430" cy="890" rx="75" ry="115" fill="#5fae4c" transform="rotate(-15 430 890)"/><ellipse cx="215" cy="800" rx="65" ry="100" fill="#58a548" transform="rotate(20 215 800)"/><ellipse cx="350" cy="1045" rx="140" ry="52" fill="#63b550" transform="rotate(-5 350 1045)"/><ellipse cx="600" cy="900" rx="45" ry="85" fill="#5aa84a" transform="rotate(-10 600 900)"/><ellipse cx="620" cy="1010" rx="120" ry="55" fill="#56a046" transform="rotate(-20 620 1010)"/><ellipse cx="130" cy="1000" rx="90" ry="70" fill="#52a044" transform="rotate(0 130 1000)"/><ellipse cx="170" cy="560" rx="70" ry="35" fill="#4f9444" transform="rotate(-20 170 560)"/><ellipse cx="660" cy="470" rx="40" ry="90" fill="#4f9a46" transform="rotate(15 660 470)"/><ellipse cx="270" cy="950" rx="60" ry="35" fill="#4c9840" transform="rotate(0 270 950)"/></g><g filter="url(#b3t)"><polygon points="1000,60 1180,60 1170,160 1060,170" fill="#5aa048" /><polygon points="1500,400 1750,220 1700,400 1540,520" fill="#4a9048" /><polygon points="1440,380 1520,330 1540,560 1470,600" fill="#5aa852" /><polygon points="1520,560 1700,660 1705,730 1600,720" fill="#4a9048" /><polygon points="1330,780 1500,740 1520,820 1400,890" fill="#4c9446" /><polygon points="1520,760 1700,790 1690,900 1610,910" fill="#3f8a44" /><polygon points="905,235 1100,190 1250,280 1335,455 1200,420 1020,310" fill="#7cc950" /><polygon points="1290,60 1420,80 1500,200 1425,400 1300,300 1270,150" fill="#6cbb48" /><polygon points="1420,350 1500,230 1615,150 1565,300 1480,380" fill="#86cc50" /><polygon points="1600,560 1800,420 1935,390 1935,520 1720,640" fill="#6cbb48" /><polygon points="1210,700 1350,670 1475,720 1385,850 1228,935" fill="#7cc950" /><polygon points="1650,130 1760,60 1935,150 1800,120" fill="#6cbb48" /><polygon points="1500,1000 1640,1010 1680,1098 1500,1098" fill="#4fa045" /><polygon points="1890,960 1935,940 1935,1090 1890,1050" fill="#62b64c" /><polygon points="1830,300 1920,290 1930,380 1850,370" fill="#4c9846" /></g><g filter="url(#b3t)"><polygon points="740,340 800,330 880,250 975,285 965,380 885,470 870,570 760,460" fill="#e24a4c" /><polygon points="885,470 1000,410 1150,430 1192,520 1130,640 1000,680 910,610" fill="#e24a4c" /><polygon points="580,595 660,520 750,480 870,560 905,615 700,645 592,632" fill="#e24a4c" /><polygon points="840,650 1000,680 1090,830 1040,930 900,990 760,900 800,750" fill="#e24a4c" /><polygon points="700,720 830,650 800,760 760,900 690,970 660,900" fill="#e24a4c" /><ellipse cx="915" cy="600" rx="55" ry="50" fill="#c93a40" /><polygon points="800,420 880,470 870,560" fill="#c93a40" opacity="0.5"/><polygon points="860,700 960,700 900,960" fill="#c93a40" opacity="0.3"/></g><g filter="url(#b3t)"><path d="M900 622 Q650 690 440 735" stroke="#f0b8c0" stroke-width="11" fill="none"/><path d="M440 735 L340 700 M420 730 L385 660" stroke="#d84858" stroke-width="12" fill="none"/><ellipse cx="493.3150477928648" cy="748.9806302766357" rx="9" ry="9" fill="#d8a028" /><ellipse cx="588.2322736423373" cy="742.6648182892413" rx="9" ry="9" fill="#e0c040" /><ellipse cx="469.17404029357385" cy="701.1851192399387" rx="9" ry="9" fill="#d8a028" /><ellipse cx="496.30956200592107" cy="721.0897864942027" rx="9" ry="9" fill="#e0c040" /><ellipse cx="525.8368910531427" cy="775.2815306146949" rx="9" ry="9" fill="#d8a028" /><ellipse cx="515.5988407840546" cy="777.491989758279" rx="9" ry="9" fill="#e8b030" /><ellipse cx="548.8804921599263" cy="778.1240776428967" rx="9" ry="9" fill="#e0c040" /><ellipse cx="514.5911409242098" cy="701.3632063599455" rx="9" ry="9" fill="#e8b030" /><ellipse cx="482.3159915667194" cy="786.1747364938182" rx="9" ry="9" fill="#e8b030" /><ellipse cx="502.1774723321997" cy="702.7910576322774" rx="9" ry="9" fill="#d8a028" /><ellipse cx="526.1848724131653" cy="764.6941531659222" rx="9" ry="9" fill="#d8a028" /><ellipse cx="559.9781277055683" cy="782.8988800825487" rx="9" ry="9" fill="#d8a028" /><ellipse cx="561.9376362273636" cy="751.9218698145144" rx="9" ry="9" fill="#e8b030" /><ellipse cx="583.0413324473259" cy="708.770887875779" rx="9" ry="9" fill="#e8b030" /><ellipse cx="529.2836777149005" cy="723.2183103031905" rx="9" ry="9" fill="#e0c040" /><ellipse cx="521.0626613278401" cy="756.3983461780124" rx="9" ry="9" fill="#d8a028" /></g></svg>
<div style="left:0px;top:111.74999999999996px;width:172.4px;height:1.1px;background:rgba(95,125,110,0.42);"></div>
<div style="left:0px;top:134.15000000000003px;width:172.4px;height:1.1px;background:rgba(95,125,110,0.42);"></div>
<div style="left:0px;top:150.65000000000003px;width:172.4px;height:1.1px;background:rgba(95,125,110,0.42);"></div>
<div style="left:0px;top:169.84999999999997px;width:172.4px;height:1.1px;background:rgba(70,95,82,0.62);"></div>
<div style="left:0px;top:188.84999999999997px;width:172.4px;height:1.1px;background:rgba(95,125,110,0.42);"></div>
<div style="left:0px;top:204.84999999999997px;width:172.4px;height:1.1px;background:rgba(95,125,110,0.42);"></div>
<div style="left:0px;top:224.05px;width:172.4px;height:1.1px;background:rgba(70,95,82,0.62);"></div>
<div style="left:0px;top:243.55px;width:172.4px;height:1.1px;background:rgba(95,125,110,0.42);"></div>
<div style="left:0px;top:262.45px;width:172.4px;height:1.1px;background:rgba(95,125,110,0.42);"></div>
</div>
<div style="left:1080.6px;top:678.5px;width:173.4px;height:279.9px;background:transparent;box-sizing:border-box;border:0.8px solid rgba(60,100,80,0.3);"></div>
<span style="left:1134.02px;top:795px;font-size:15.6px;color:#3b4a42;letter-spacing:0.987px;">Hibiscus</span>
<span style="left:1141.90px;top:834px;font-size:13.4px;color:#1e8a4b;font-weight:700;letter-spacing:0.401px;">Planted</span>
<span style="left:1126.29px;top:853px;font-size:13.4px;color:#36403a;letter-spacing:0.445px;">Jan 12, 2020</span>
<span style="left:1124.40px;top:888px;font-size:13.4px;color:#1e8a4b;font-weight:700;letter-spacing:0.199px;">Last Watered</span>
<span style="left:1126.29px;top:908px;font-size:13.4px;color:#36403a;letter-spacing:0.445px;">Jan 12, 2020</span>
<span style="left:1116.32px;top:927px;font-size:13.4px;color:#36403a;letter-spacing:0.567px;">water tomorrow.</span>
<div style="left:1277.4px;top:660.3px;width:172.4px;height:278.80000000000007px;background:#d5eee0;box-shadow:0.8px 1.2px 1.6px rgba(0,40,20,0.4);border-bottom-left-radius:9px 8px;overflow:hidden">
<svg style="left:0px;top:0px" width="172.4" height="96.4" viewBox="62 45 1878 1053" preserveAspectRatio="none"><defs><filter id="b4" x="-10%" y="-10%" width="120%" height="120%"><feGaussianBlur stdDeviation="6"/></filter><filter id="b4b"><feGaussianBlur stdDeviation="22"/></filter></defs><rect x="0" y="0" width="2000" height="1150" fill="#5db448"/><g filter="url(#b4b)"><ellipse cx="300" cy="250" rx="300" ry="150" fill="#7fd060" /><ellipse cx="1000" cy="300" rx="200" ry="150" fill="#4a9a3a" /><ellipse cx="800" cy="820" rx="200" ry="160" fill="#3f9030" /><ellipse cx="1700" cy="300" rx="250" ry="200" fill="#74c85c" /><ellipse cx="1600" cy="850" rx="300" ry="200" fill="#62b84c" /><ellipse cx="250" cy="800" rx="250" ry="200" fill="#55a843" /><ellipse cx="1250" cy="600" rx="200" ry="200" fill="#6cc054" /><ellipse cx="600" cy="500" rx="180" ry="200" fill="#84d268" /><ellipse cx="1100" cy="980" rx="250" ry="100" fill="#58ac44" /><ellipse cx="200" cy="1020" rx="200" ry="80" fill="#4a9a3a" /><ellipse cx="1900" cy="500" rx="80" ry="150" fill="#3f8c32" /></g><g filter="url(#b4)"><polygon points="440,771 395,791 357,816 338,782 310,752 363,747 414,736" fill="#2f7526" opacity="0.8" transform="rotate(152 372 771)"/><polygon points="2008,545 1951,570 1901,602 1877,559 1842,519 1910,513 1975,499" fill="#3f9232" opacity="0.8" transform="rotate(91 1921 545)"/><polygon points="558,48 523,63 494,82 479,57 458,33 499,30 538,21" fill="#4ea23e" opacity="0.8" transform="rotate(12 505 48)"/><polygon points="1597,290 1568,302 1543,318 1531,297 1513,277 1547,274 1580,267" fill="#8bd86c" opacity="0.8" transform="rotate(79 1553 290)"/><polygon points="1986,857 1950,872 1919,892 1904,865 1882,841 1925,837 1965,828" fill="#2f7526" opacity="0.8" transform="rotate(6 1931 857)"/><polygon points="717,569 692,580 672,593 661,575 646,558 675,556 703,550" fill="#9be07c" opacity="0.8" transform="rotate(4 680 569)"/><polygon points="1532,138 1481,161 1436,189 1415,151 1383,115 1444,110 1503,97" fill="#8bd86c" opacity="0.8" transform="rotate(82 1454 138)"/><polygon points="1158,406 1119,423 1086,444 1069,415 1045,389 1091,385 1135,375" fill="#3f9232" opacity="0.8" transform="rotate(120 1099 406)"/><polygon points="979,909 956,918 937,931 927,914 913,899 940,896 966,891" fill="#357f2b" opacity="0.8" transform="rotate(38 945 909)"/><polygon points="1957,986 1907,1008 1865,1035 1844,998 1814,965 1872,959 1928,947" fill="#7acb5c" opacity="0.8" transform="rotate(22 1881 986)"/><polygon points="999,916 971,928 947,943 936,923 919,904 951,901 983,894" fill="#3f9232" opacity="0.8" transform="rotate(160 957 916)"/><polygon points="888,430 851,446 819,467 803,439 780,413 824,409 867,400" fill="#4ea23e" opacity="0.8" transform="rotate(57 831 430)"/><polygon points="1052,325 999,348 954,377 932,338 900,302 962,296 1022,283" fill="#3f9232" opacity="0.8" transform="rotate(129 972 325)"/><polygon points="1986,567 1947,584 1913,606 1897,577 1873,550 1919,546 1964,536" fill="#82d064" opacity="0.8" transform="rotate(108 1927 567)"/><polygon points="1092,647 1059,661 1032,679 1018,655 998,633 1037,629 1073,621" fill="#7acb5c" opacity="0.8" transform="rotate(33 1043 647)"/><polygon points="467,412 411,436 362,467 339,425 304,387 371,381 435,367" fill="#9be07c" opacity="0.8" transform="rotate(137 381 412)"/><polygon points="1848,304 1822,315 1799,330 1788,310 1772,292 1803,289 1833,283" fill="#3f9232" opacity="0.8" transform="rotate(140 1808 304)"/><polygon points="837,765 790,785 750,810 731,776 702,744 757,739 810,728" fill="#357f2b" opacity="0.8" transform="rotate(73 766 765)"/><polygon points="1985,1057 1942,1076 1905,1100 1887,1068 1861,1038 1912,1034 1960,1023" fill="#9be07c" opacity="0.8" transform="rotate(88 1920 1057)"/><polygon points="850,305 796,329 749,359 726,318 693,281 757,276 819,262" fill="#3f9232" opacity="0.8" transform="rotate(101 767 305)"/><polygon points="961,474 912,495 870,522 850,486 820,453 878,447 933,435" fill="#8bd86c" opacity="0.8" transform="rotate(151 887 474)"/><polygon points="207,317 176,330 149,347 136,324 117,303 154,300 190,292" fill="#4ea23e" opacity="0.8" transform="rotate(45 160 317)"/><polygon points="872,962 826,981 788,1006 769,972 741,942 795,937 846,926" fill="#3f9232" opacity="0.8" transform="rotate(177 803 962)"/><polygon points="1508,549 1478,562 1453,579 1440,557 1422,536 1457,533 1491,526" fill="#82d064" opacity="0.8" transform="rotate(164 1463 549)"/><polygon points="1046,1048 990,1072 943,1103 920,1062 886,1024 951,1018 1014,1005" fill="#9be07c" opacity="0.8" transform="rotate(143 962 1048)"/><polygon points="1773,678 1736,694 1705,714 1690,687 1667,662 1711,658 1752,649" fill="#2f7526" opacity="0.8" transform="rotate(55 1717 678)"/><polygon points="1142,336 1092,357 1049,385 1028,348 997,314 1056,308 1113,296" fill="#8bd86c" opacity="0.8" transform="rotate(69 1065 336)"/><polygon points="344,799 314,812 288,828 276,806 257,785 293,782 327,775" fill="#9be07c" opacity="0.8" transform="rotate(116 298 799)"/><polygon points="1707,660 1677,673 1651,690 1639,668 1621,647 1656,644 1690,637" fill="#4ea23e" opacity="0.8" transform="rotate(135 1661 660)"/><polygon points="1626,191 1600,202 1579,216 1568,197 1553,180 1583,177 1611,171" fill="#4ea23e" opacity="0.8" transform="rotate(17 1587 191)"/><polygon points="148,516 123,527 101,541 90,522 75,504 105,502 134,495" fill="#7acb5c" opacity="0.8" transform="rotate(118 110 516)"/><polygon points="349,612 317,626 289,644 275,620 255,598 294,595 330,586" fill="#2f7526" opacity="0.8" transform="rotate(160 300 612)"/><polygon points="1310,236 1257,260 1210,289 1188,249 1155,213 1219,207 1279,194" fill="#357f2b" opacity="0.8" transform="rotate(128 1229 236)"/><polygon points="1168,94 1120,114 1079,141 1059,105 1030,73 1086,68 1140,56" fill="#8bd86c" opacity="0.8" transform="rotate(142 1095 94)"/><polygon points="111,533 88,543 69,555 60,539 46,524 73,521 98,516" fill="#3f9232" opacity="0.8" transform="rotate(154 77 533)"/><polygon points="566,1060 523,1079 485,1103 467,1071 440,1041 492,1036 542,1026" fill="#8bd86c" opacity="0.8" transform="rotate(44 500 1060)"/><polygon points="445,810 386,835 335,868 311,824 275,784 344,778 411,763" fill="#82d064" opacity="0.8" transform="rotate(145 355 810)"/><polygon points="1045,648 1004,666 968,689 951,658 926,630 975,626 1021,616" fill="#8bd86c" opacity="0.8" transform="rotate(91 982 648)"/><polygon points="1490,1063 1458,1077 1431,1095 1417,1071 1398,1049 1436,1046 1472,1038" fill="#82d064" opacity="0.8" transform="rotate(136 1442 1063)"/><polygon points="468,694 435,708 407,726 393,702 373,680 412,676 449,668" fill="#357f2b" opacity="0.8" transform="rotate(64 418 694)"/><polygon points="696,1091 672,1101 651,1115 641,1097 627,1080 655,1078 682,1072" fill="#7acb5c" opacity="0.8" transform="rotate(117 659 1091)"/><polygon points="1327,895 1269,921 1219,953 1195,910 1159,870 1228,864 1294,849" fill="#82d064" opacity="0.8" transform="rotate(112 1239 895)"/><polygon points="156,724 119,740 87,761 71,733 48,707 92,704 134,694" fill="#82d064" opacity="0.8" transform="rotate(92 99 724)"/><polygon points="1738,119 1717,128 1699,140 1691,124 1678,110 1703,108 1726,103" fill="#4ea23e" opacity="0.8" transform="rotate(8 1706 119)"/><polygon points="634,666 598,681 567,701 553,674 531,650 573,646 613,637" fill="#4ea23e" opacity="0.8" transform="rotate(82 580 666)"/><polygon points="565,451 526,468 493,489 477,460 453,434 499,430 543,420" fill="#7acb5c" opacity="0.8" transform="rotate(7 506 451)"/><polygon points="453,438 409,457 372,481 354,448 327,419 378,414 428,403" fill="#357f2b" opacity="0.8" transform="rotate(140 387 438)"/><polygon points="1309,844 1263,864 1224,889 1204,855 1176,823 1231,819 1283,807" fill="#6cc052" opacity="0.8" transform="rotate(44 1239 844)"/><polygon points="1850,451 1806,471 1769,495 1750,462 1723,432 1775,427 1825,417" fill="#82d064" opacity="0.8" transform="rotate(173 1784 451)"/><polygon points="1968,52 1936,66 1909,83 1896,59 1876,38 1914,34 1950,26" fill="#6cc052" opacity="0.8" transform="rotate(158 1920 52)"/><polygon points="1448,141 1421,152 1398,167 1387,147 1371,129 1402,126 1433,119" fill="#82d064" opacity="0.8" transform="rotate(54 1407 141)"/><polygon points="1892,827 1854,843 1821,864 1805,836 1782,810 1827,806 1870,797" fill="#7acb5c" opacity="0.8" transform="rotate(178 1834 827)"/><polygon points="445,501 399,522 359,547 340,512 311,481 366,476 419,464" fill="#9be07c" opacity="0.8" transform="rotate(115 375 501)"/><polygon points="1429,320 1372,345 1323,376 1299,334 1264,295 1331,289 1396,274" fill="#9be07c" opacity="0.8" transform="rotate(93 1342 320)"/><polygon points="1921,1063 1865,1088 1818,1118 1795,1077 1761,1039 1826,1033 1889,1020" fill="#82d064" opacity="0.8" transform="rotate(36 1837 1063)"/><polygon points="1238,337 1203,352 1173,371 1159,346 1137,322 1179,318 1218,310" fill="#4ea23e" opacity="0.8" transform="rotate(84 1185 337)"/><polygon points="929,695 899,708 872,725 859,702 840,681 877,678 912,670" fill="#3f9232" opacity="0.8" transform="rotate(120 882 695)"/><polygon points="1318,149 1260,175 1210,207 1186,163 1150,124 1219,118 1285,103" fill="#357f2b" opacity="0.8" transform="rotate(6 1230 149)"/><polygon points="1656,1029 1609,1050 1568,1076 1548,1041 1519,1008 1575,1003 1629,992" fill="#8bd86c" opacity="0.8" transform="rotate(13 1584 1029)"/><polygon points="1208,464 1171,480 1139,501 1123,473 1100,448 1144,444 1186,435" fill="#2f7526" opacity="0.8" transform="rotate(43 1151 464)"/><polygon points="112,618 89,628 68,641 59,624 44,608 72,606 99,600" fill="#6cc052" opacity="0.8" transform="rotate(34 76 618)"/><polygon points="798,48 772,60 749,74 738,55 722,37 753,34 783,27" fill="#4ea23e" opacity="0.8" transform="rotate(95 758 48)"/><polygon points="208,243 173,258 142,278 127,251 106,227 148,223 188,214" fill="#82d064" opacity="0.8" transform="rotate(44 154 243)"/><polygon points="1207,912 1164,931 1127,955 1109,923 1083,894 1134,889 1182,879" fill="#2f7526" opacity="0.8" transform="rotate(159 1142 912)"/><polygon points="130,658 107,668 87,681 78,663 64,648 91,645 117,640" fill="#357f2b" opacity="0.8" transform="rotate(27 95 658)"/><polygon points="1058,599 1017,617 982,640 965,609 940,581 988,577 1035,567" fill="#2f7526" opacity="0.8" transform="rotate(85 996 599)"/><polygon points="1611,401 1580,414 1554,431 1542,408 1523,388 1559,384 1593,377" fill="#9be07c" opacity="0.8" transform="rotate(52 1565 401)"/><polygon points="1342,55 1291,77 1246,106 1225,67 1193,32 1254,27 1313,14" fill="#7acb5c" opacity="0.8" transform="rotate(34 1264 55)"/><polygon points="298,917 264,932 235,951 221,925 200,902 240,899 279,890" fill="#9be07c" opacity="0.8" transform="rotate(11 246 917)"/><polygon points="203,566 156,587 116,612 97,578 68,546 123,541 176,529" fill="#4ea23e" opacity="0.8" transform="rotate(28 132 566)"/><polygon points="320,1025 279,1043 244,1066 227,1035 201,1007 250,1003 296,993" fill="#4ea23e" opacity="0.8" transform="rotate(36 258 1025)"/><polygon points="481,1050 444,1065 413,1086 398,1058 376,1034 419,1030 460,1021" fill="#9be07c" opacity="0.8" transform="rotate(149 425 1050)"/><polygon points="514,88 481,102 452,121 438,96 417,73 457,69 495,61" fill="#82d064" opacity="0.8" transform="rotate(114 463 88)"/><polygon points="1321,67 1287,82 1257,101 1243,75 1222,52 1262,49 1301,40" fill="#2f7526" opacity="0.8" transform="rotate(29 1269 67)"/><polygon points="1744,894 1689,919 1641,949 1618,908 1584,870 1650,864 1713,851" fill="#8bd86c" opacity="0.8" transform="rotate(39 1660 894)"/><polygon points="1584,996 1544,1013 1509,1036 1492,1005 1467,978 1515,973 1561,963" fill="#7acb5c" opacity="0.8" transform="rotate(175 1522 996)"/><polygon points="881,1037 824,1061 776,1093 752,1050 717,1012 784,1006 848,992" fill="#9be07c" opacity="0.8" transform="rotate(2 795 1037)"/><polygon points="789,691 746,710 708,734 690,702 663,672 715,667 764,656" fill="#4ea23e" opacity="0.8" transform="rotate(116 723 691)"/><polygon points="427,1025 387,1043 351,1066 334,1035 309,1007 358,1003 404,993" fill="#4ea23e" opacity="0.8" transform="rotate(37 365 1025)"/><polygon points="2013,629 1963,651 1919,679 1898,641 1867,607 1927,602 1984,589" fill="#9be07c" opacity="0.8" transform="rotate(164 1936 629)"/><polygon points="564,676 530,691 501,709 487,684 466,661 506,658 544,649" fill="#9be07c" opacity="0.8" transform="rotate(103 512 676)"/><polygon points="2016,1005 1959,1030 1910,1062 1886,1019 1850,980 1918,974 1983,960" fill="#8bd86c" opacity="0.8" transform="rotate(177 1929 1005)"/><polygon points="1495,826 1467,838 1442,854 1431,833 1413,814 1447,811 1478,804" fill="#82d064" opacity="0.8" transform="rotate(94 1452 826)"/><polygon points="1780,586 1756,597 1735,610 1724,592 1709,575 1738,573 1766,567" fill="#357f2b" opacity="0.8" transform="rotate(119 1743 586)"/><polygon points="1274,534 1235,551 1201,573 1185,544 1161,517 1207,513 1252,503" fill="#357f2b" opacity="0.8" transform="rotate(117 1214 534)"/><polygon points="590,498 555,513 525,532 511,506 490,483 531,479 570,470" fill="#2f7526" opacity="0.8" transform="rotate(86 537 498)"/><polygon points="180,949 153,961 129,977 117,956 100,937 133,934 164,927" fill="#9be07c" opacity="0.8" transform="rotate(106 138 949)"/><polygon points="1643,821 1595,842 1553,869 1533,832 1503,799 1561,794 1616,782" fill="#3f9232" opacity="0.8" transform="rotate(68 1570 821)"/><polygon points="871,49 825,69 786,94 767,60 738,29 793,24 845,13" fill="#6cc052" opacity="0.8" transform="rotate(104 801 49)"/><polygon points="1979,252 1951,265 1926,281 1914,259 1896,240 1930,237 1963,230" fill="#82d064" opacity="0.8" transform="rotate(146 1936 252)"/><polygon points="1021,103 987,118 957,137 943,111 922,88 962,84 1001,76" fill="#3f9232" opacity="0.8" transform="rotate(90 969 103)"/><polygon points="996,455 952,475 914,499 895,466 868,436 920,431 971,420" fill="#7acb5c" opacity="0.8" transform="rotate(156 929 455)"/><polygon points="1518,440 1488,453 1463,469 1451,447 1432,427 1467,424 1501,416" fill="#2f7526" opacity="0.8" transform="rotate(143 1473 440)"/><polygon points="1886,254 1833,278 1787,307 1765,267 1732,231 1795,225 1855,212" fill="#7acb5c" opacity="0.8" transform="rotate(134 1805 254)"/><polygon points="604,182 555,203 512,231 492,194 461,160 520,155 576,143" fill="#6cc052" opacity="0.8" transform="rotate(19 529 182)"/><polygon points="1282,725 1242,743 1207,765 1191,735 1166,708 1213,703 1259,694" fill="#3f9232" opacity="0.8" transform="rotate(90 1221 725)"/><polygon points="1472,274 1426,295 1385,321 1366,286 1337,254 1392,249 1445,237" fill="#9be07c" opacity="0.8" transform="rotate(166 1401 274)"/><polygon points="1124,55 1071,78 1025,107 1004,67 971,31 1034,26 1094,13" fill="#6cc052" opacity="0.8" transform="rotate(10 1043 55)"/><polygon points="1407,481 1383,491 1361,505 1351,487 1336,470 1365,467 1393,461" fill="#82d064" opacity="0.8" transform="rotate(4 1370 481)"/><polygon points="1480,671 1442,687 1410,708 1395,680 1372,655 1416,651 1458,642" fill="#82d064" opacity="0.8" transform="rotate(97 1423 671)"/><polygon points="1124,500 1103,509 1086,521 1077,505 1064,491 1089,489 1112,484" fill="#9be07c" opacity="0.8" transform="rotate(26 1093 500)"/><polygon points="886,512 840,532 801,557 782,523 755,492 808,488 860,476" fill="#82d064" opacity="0.8" transform="rotate(106 817 512)"/><polygon points="968,290 914,313 869,343 846,303 814,266 877,261 937,248" fill="#2f7526" opacity="0.8" transform="rotate(152 887 290)"/><polygon points="1592,995 1543,1017 1500,1044 1480,1007 1449,973 1508,968 1564,956" fill="#9be07c" opacity="0.8" transform="rotate(88 1517 995)"/><polygon points="422,886 389,901 361,919 347,894 327,872 366,869 403,861" fill="#9be07c" opacity="0.8" transform="rotate(54 372 886)"/><polygon points="1916,526 1888,538 1864,553 1853,533 1835,514 1868,511 1900,504" fill="#8bd86c" opacity="0.8" transform="rotate(112 1873 526)"/><polygon points="1690,278 1666,288 1645,302 1635,284 1620,267 1649,265 1676,259" fill="#82d064" opacity="0.8" transform="rotate(116 1653 278)"/><polygon points="1280,174 1255,184 1234,198 1224,180 1209,163 1238,160 1266,154" fill="#357f2b" opacity="0.8" transform="rotate(97 1242 174)"/><polygon points="288,300 244,319 207,343 189,311 162,281 214,277 263,266" fill="#7acb5c" opacity="0.8" transform="rotate(44 222 300)"/><polygon points="959,875 902,900 854,931 831,889 796,851 863,845 926,831" fill="#8bd86c" opacity="0.8" transform="rotate(72 873 875)"/><polygon points="1935,894 1888,915 1848,941 1829,906 1800,874 1855,869 1908,857" fill="#4ea23e" opacity="0.8" transform="rotate(6 1864 894)"/><polygon points="1074,984 1024,1006 981,1033 960,996 929,962 989,956 1046,944" fill="#2f7526" opacity="0.8" transform="rotate(33 998 984)"/><polygon points="1889,129 1832,154 1782,186 1758,143 1722,104 1791,98 1856,83" fill="#2f7526" opacity="0.8" transform="rotate(130 1801 129)"/><polygon points="1109,218 1076,232 1047,250 1034,226 1013,203 1052,200 1090,191" fill="#2f7526" opacity="0.8" transform="rotate(118 1059 218)"/><polygon points="826,889 805,898 786,910 777,894 763,879 789,877 814,871" fill="#6cc052" opacity="0.8" transform="rotate(105 793 889)"/><polygon points="1014,909 989,920 968,934 957,915 942,898 971,895 1000,889" fill="#3f9232" opacity="0.8" transform="rotate(56 976 909)"/><polygon points="866,329 820,349 780,375 760,340 732,309 787,304 839,292" fill="#357f2b" opacity="0.8" transform="rotate(9 795 329)"/><polygon points="1523,916 1483,934 1449,956 1432,926 1408,899 1455,895 1500,885" fill="#7acb5c" opacity="0.8" transform="rotate(113 1463 916)"/><polygon points="1003,631 969,646 940,665 926,639 905,616 945,612 984,604" fill="#357f2b" opacity="0.8" transform="rotate(8 951 631)"/><polygon points="1294,685 1257,702 1225,722 1210,694 1187,669 1231,665 1273,656" fill="#8bd86c" opacity="0.8" transform="rotate(77 1238 685)"/><polygon points="481,78 453,91 429,106 417,85 399,66 433,63 465,56" fill="#9be07c" opacity="0.8" transform="rotate(2 438 78)"/><polygon points="1602,940 1545,965 1495,997 1471,954 1436,915 1504,909 1569,894" fill="#357f2b" opacity="0.8" transform="rotate(133 1515 940)"/><polygon points="1101,440 1070,454 1044,471 1031,448 1012,427 1049,424 1084,416" fill="#3f9232" opacity="0.8" transform="rotate(124 1054 440)"/><polygon points="1047,391 992,415 945,445 922,404 888,367 953,361 1016,347" fill="#3f9232" opacity="0.8" transform="rotate(52 964 391)"/><polygon points="1545,778 1496,800 1454,827 1434,790 1404,757 1461,752 1517,740" fill="#7acb5c" opacity="0.8" transform="rotate(158 1471 778)"/><polygon points="574,1095 541,1109 513,1127 500,1102 479,1080 518,1077 555,1069" fill="#4ea23e" opacity="0.8" transform="rotate(148 524 1095)"/><polygon points="1564,805 1543,814 1525,825 1516,810 1503,796 1528,793 1552,788" fill="#6cc052" opacity="0.8" transform="rotate(165 1532 805)"/><polygon points="536,1082 486,1103 443,1131 422,1094 391,1060 451,1054 507,1042" fill="#357f2b" opacity="0.8" transform="rotate(142 460 1082)"/><polygon points="1779,986 1727,1009 1682,1038 1661,999 1628,963 1690,958 1749,945" fill="#357f2b" opacity="0.8" transform="rotate(90 1700 986)"/><polygon points="1468,586 1410,611 1360,643 1336,600 1300,561 1369,555 1435,540" fill="#4ea23e" opacity="0.8" transform="rotate(69 1380 586)"/><polygon points="1867,856 1827,873 1792,896 1776,866 1751,838 1798,834 1844,824" fill="#8bd86c" opacity="0.8" transform="rotate(25 1806 856)"/><polygon points="127,142 89,159 57,180 41,152 18,126 63,122 105,113" fill="#2f7526" opacity="0.8" transform="rotate(9 70 142)"/><polygon points="1318,162 1279,180 1244,202 1228,172 1203,145 1250,141 1296,131" fill="#6cc052" opacity="0.8" transform="rotate(117 1258 162)"/><polygon points="1776,352 1726,374 1683,401 1662,364 1632,330 1691,325 1747,312" fill="#82d064" opacity="0.8" transform="rotate(21 1700 352)"/><polygon points="797,784 745,807 699,836 678,797 645,761 707,755 767,742" fill="#6cc052" opacity="0.8" transform="rotate(83 717 784)"/><polygon points="1812,973 1782,986 1756,1003 1744,980 1725,960 1761,957 1795,949" fill="#9be07c" opacity="0.8" transform="rotate(24 1766 973)"/><polygon points="761,1031 727,1046 699,1064 685,1039 664,1016 704,1013 742,1004" fill="#3f9232" opacity="0.8" transform="rotate(147 710 1031)"/><polygon points="616,870 596,879 579,890 570,875 558,861 582,859 604,854" fill="#9be07c" opacity="0.8" transform="rotate(8 585 870)"/><polygon points="1604,775 1565,792 1531,814 1514,785 1490,758 1537,754 1582,744" fill="#8bd86c" opacity="0.8" transform="rotate(145 1544 775)"/><polygon points="451,649 410,667 374,690 356,659 331,630 380,626 427,616" fill="#3f9232" opacity="0.8" transform="rotate(152 388 649)"/><polygon points="1305,223 1255,245 1213,272 1192,235 1161,201 1220,196 1277,183" fill="#7acb5c" opacity="0.8" transform="rotate(31 1229 223)"/><polygon points="1486,479 1454,493 1426,511 1412,487 1392,465 1431,461 1468,453" fill="#4ea23e" opacity="0.8" transform="rotate(69 1437 479)"/><polygon points="1640,357 1584,382 1536,413 1512,371 1478,332 1544,326 1608,312" fill="#8bd86c" opacity="0.8" transform="rotate(44 1555 357)"/><polygon points="721,365 684,381 653,402 637,374 615,349 658,345 700,336" fill="#357f2b" opacity="0.8" transform="rotate(179 665 365)"/><polygon points="304,1061 248,1085 200,1116 177,1074 143,1036 209,1030 272,1016" fill="#2f7526" opacity="0.8" transform="rotate(128 219 1061)"/><polygon points="1888,238 1840,259 1799,286 1779,250 1749,217 1806,212 1861,200" fill="#2f7526" opacity="0.8" transform="rotate(177 1815 238)"/><polygon points="1750,1005 1727,1015 1708,1028 1698,1010 1684,995 1711,992 1737,987" fill="#82d064" opacity="0.8" transform="rotate(88 1715 1005)"/><polygon points="1832,221 1791,239 1756,262 1738,231 1713,203 1762,198 1809,188" fill="#7acb5c" opacity="0.8" transform="rotate(111 1770 221)"/><polygon points="168,852 109,878 59,910 34,866 -2,826 68,820 134,806" fill="#82d064" opacity="0.8" transform="rotate(25 79 852)"/><polygon points="1289,708 1267,718 1248,730 1239,714 1225,699 1251,696 1276,691" fill="#2f7526" opacity="0.8" transform="rotate(16 1255 708)"/></g><g filter="url(#b4)"><path d="M62 230 Q400 60 700 80" stroke="#86d464" stroke-width="40" fill="none"/><path d="M62 330 Q300 300 560 310" stroke="#90dc6e" stroke-width="36" fill="none"/><path d="M62 440 Q250 380 480 350" stroke="#7acc5a" stroke-width="28" fill="none"/><path d="M1000 140 Q1300 500 1380 1098" stroke="#7cd05a" stroke-width="26" fill="none"/><path d="M470 580 Q700 800 790 1098" stroke="#8ad868" stroke-width="26" fill="none"/><path d="M900 740 Q1000 900 1150 980" stroke="#a0e080" stroke-width="20" fill="none"/><path d="M1230 60 Q1500 150 1640 230" stroke="#9ae078" stroke-width="26" fill="none"/><path d="M1200 520 Q1500 600 1940 620" stroke="#b8ecac" stroke-width="18" fill="none"/><path d="M1500 200 Q1560 330 1470 400" stroke="#8cd86a" stroke-width="14" fill="none"/><path d="M1450 640 Q1480 760 1400 830" stroke="#80cc60" stroke-width="14" fill="none"/></g><rect x="0" y="0" width="2000" height="1150" fill="#b4f09c" opacity="0.16"/></svg>
<div style="left:0px;top:111.8500000000001px;width:172.4px;height:1.1px;background:rgba(95,125,110,0.42);"></div>
<div style="left:0px;top:133.65000000000003px;width:172.4px;height:1.1px;background:rgba(95,125,110,0.42);"></div>
<div style="left:0px;top:150.15000000000003px;width:172.4px;height:1.1px;background:rgba(95,125,110,0.42);"></div>
<div style="left:0px;top:169.35000000000008px;width:172.4px;height:1.1px;background:rgba(70,95,82,0.62);"></div>
<div style="left:0px;top:188.55px;width:172.4px;height:1.1px;background:rgba(95,125,110,0.42);"></div>
<div style="left:0px;top:204.35000000000008px;width:172.4px;height:1.1px;background:rgba(95,125,110,0.42);"></div>
<div style="left:0px;top:223.55px;width:172.4px;height:1.1px;background:rgba(70,95,82,0.62);"></div>
<div style="left:0px;top:242.75000000000006px;width:172.4px;height:1.1px;background:rgba(95,125,110,0.42);"></div>
<div style="left:0px;top:261.95px;width:172.4px;height:1.1px;background:rgba(95,125,110,0.42);"></div>
</div>
<div style="left:1276.9px;top:659.8px;width:173.4px;height:279.80000000000007px;background:transparent;box-sizing:border-box;border:0.8px solid rgba(60,100,80,0.3);"></div>
<span style="left:1334.51px;top:777px;font-size:15.6px;color:#3b4a42;letter-spacing:0.616px;">Cilantro</span>
<span style="left:1338.20px;top:815px;font-size:13.4px;color:#1e8a4b;font-weight:700;letter-spacing:0.401px;">Planted</span>
<span style="left:1326.64px;top:834px;font-size:13.4px;color:#36403a;letter-spacing:0.423px;">Jan 5, 2020</span>
<span style="left:1320.45px;top:869px;font-size:13.4px;color:#1e8a4b;font-weight:700;letter-spacing:0.244px;">Last Watered</span>
<span style="left:1326.64px;top:889px;font-size:13.4px;color:#36403a;letter-spacing:0.423px;">Jan 5, 2020</span>
<span style="left:1314.37px;top:908px;font-size:13.4px;color:#36403a;letter-spacing:0.395px;">water in 2 days.</span>
<div style="left:1277.4px;top:965.4px;width:172.4px;height:18.6px;overflow:hidden;outline:0.6px solid rgba(70,110,90,0.55)">
<svg style="left:0px;top:0px" width="172.4" height="96.4" viewBox="68 130 2172 1215" preserveAspectRatio="none"><defs><filter id="b5"><feGaussianBlur stdDeviation="5"/></filter></defs><rect x="0" y="0" width="2400" height="1400" fill="#92ccf0"/><g filter="url(#b5)"><polygon points="300,130 1150,130 1180,360 260,360" fill="#4f8c3a" /><polygon points="150,200 320,150 330,360 120,360" fill="#5a9844" /><ellipse cx="495" cy="351" rx="31" ry="18" fill="#a6cf72" /><ellipse cx="338" cy="161" rx="62" ry="37" fill="#7ab34e" /><ellipse cx="480" cy="278" rx="46" ry="27" fill="#3a6e2a" /><ellipse cx="636" cy="262" rx="65" ry="39" fill="#3a6e2a" /><ellipse cx="377" cy="184" rx="26" ry="16" fill="#93c662" /><ellipse cx="747" cy="239" rx="66" ry="40" fill="#a6cf72" /><ellipse cx="398" cy="189" rx="70" ry="42" fill="#437c30" /><ellipse cx="632" cy="321" rx="30" ry="18" fill="#437c30" /><ellipse cx="591" cy="289" rx="47" ry="28" fill="#a6cf72" /><ellipse cx="744" cy="178" rx="61" ry="37" fill="#7ab34e" /><ellipse cx="355" cy="348" rx="47" ry="28" fill="#6aa844" /><ellipse cx="427" cy="328" rx="46" ry="27" fill="#7ab34e" /><ellipse cx="1058" cy="196" rx="41" ry="25" fill="#3a6e2a" /><ellipse cx="416" cy="306" rx="29" ry="18" fill="#a6cf72" /><ellipse cx="570" cy="212" rx="54" ry="32" fill="#3a6e2a" /><ellipse cx="733" cy="175" rx="32" ry="19" fill="#7ab34e" /><ellipse cx="545" cy="281" rx="61" ry="37" fill="#55943c" /><ellipse cx="736" cy="291" rx="35" ry="21" fill="#6aa844" /><ellipse cx="1081" cy="198" rx="35" ry="21" fill="#437c30" /><ellipse cx="664" cy="217" rx="63" ry="38" fill="#3a6e2a" /><ellipse cx="451" cy="221" rx="32" ry="19" fill="#a6cf72" /><ellipse cx="1033" cy="136" rx="69" ry="41" fill="#6aa844" /><ellipse cx="558" cy="133" rx="59" ry="36" fill="#93c662" /><ellipse cx="1019" cy="261" rx="66" ry="39" fill="#6aa844" /><ellipse cx="653" cy="233" rx="44" ry="26" fill="#7ab34e" /><ellipse cx="360" cy="295" rx="27" ry="16" fill="#a6cf72" /><ellipse cx="392" cy="250" rx="41" ry="25" fill="#55943c" /><ellipse cx="1105" cy="242" rx="32" ry="19" fill="#7ab34e" /><ellipse cx="354" cy="134" rx="31" ry="19" fill="#3a6e2a" /><ellipse cx="866" cy="158" rx="38" ry="23" fill="#93c662" /><ellipse cx="1130" cy="131" rx="63" ry="38" fill="#6aa844" /><ellipse cx="352" cy="272" rx="65" ry="39" fill="#55943c" /><ellipse cx="953" cy="358" rx="51" ry="31" fill="#6aa844" /><ellipse cx="590" cy="229" rx="30" ry="18" fill="#6aa844" /><ellipse cx="821" cy="244" rx="46" ry="28" fill="#6aa844" /><ellipse cx="628" cy="155" rx="57" ry="34" fill="#a6cf72" /><ellipse cx="409" cy="231" rx="58" ry="35" fill="#a6cf72" /><ellipse cx="1099" cy="260" rx="62" ry="37" fill="#3a6e2a" /><ellipse cx="494" cy="175" rx="45" ry="27" fill="#437c30" /><ellipse cx="482" cy="131" rx="52" ry="31" fill="#437c30" /><ellipse cx="863" cy="321" rx="49" ry="29" fill="#a6cf72" /><ellipse cx="950" cy="246" rx="57" ry="34" fill="#6aa844" /><ellipse cx="731" cy="205" rx="42" ry="25" fill="#7ab34e" /><ellipse cx="857" cy="132" rx="53" ry="32" fill="#437c30" /><ellipse cx="939" cy="343" rx="69" ry="42" fill="#6aa844" /><ellipse cx="844" cy="148" rx="44" ry="26" fill="#a6cf72" /><ellipse cx="1458" cy="347" rx="31" ry="21" fill="#6aa852" /><ellipse cx="1412" cy="321" rx="20" ry="14" fill="#4a8438" /><ellipse cx="1656" cy="155" rx="23" ry="16" fill="#8cc270" /><ellipse cx="1871" cy="325" rx="19" ry="13" fill="#4a8438" /><ellipse cx="1478" cy="218" rx="32" ry="23" fill="#6aa852" /><ellipse cx="1855" cy="297" rx="30" ry="21" fill="#6aa852" /><ellipse cx="1610" cy="285" rx="16" ry="11" fill="#6aa852" /><ellipse cx="1555" cy="149" rx="16" ry="11" fill="#8cc270" /><ellipse cx="1713" cy="192" rx="21" ry="15" fill="#5f9a48" /><ellipse cx="1637" cy="320" rx="34" ry="24" fill="#4a8438" /><ellipse cx="1763" cy="246" rx="18" ry="13" fill="#8cc270" /><ellipse cx="1371" cy="187" rx="17" ry="12" fill="#6aa852" /><ellipse cx="1723" cy="187" rx="30" ry="21" fill="#6aa852" /><ellipse cx="1568" cy="175" rx="23" ry="16" fill="#5f9a48" /><ellipse cx="1755" cy="219" rx="26" ry="18" fill="#6aa852" /><ellipse cx="1895" cy="342" rx="29" ry="21" fill="#7ab860" /><ellipse cx="1215" cy="174" rx="18" ry="12" fill="#5f9a48" /><ellipse cx="1524" cy="330" rx="32" ry="22" fill="#6aa852" /><ellipse cx="1265" cy="270" rx="31" ry="22" fill="#5f9a48" /><ellipse cx="1424" cy="139" rx="32" ry="23" fill="#7ab860" /><ellipse cx="1658" cy="214" rx="30" ry="21" fill="#7ab860" /><ellipse cx="1707" cy="268" rx="19" ry="13" fill="#4a8438" /><ellipse cx="1721" cy="352" rx="13" ry="9" fill="#5f9a48" /><ellipse cx="1842" cy="270" rx="22" ry="15" fill="#7ab860" /><ellipse cx="1378" cy="220" rx="21" ry="15" fill="#5f9a48" /><ellipse cx="1270" cy="181" rx="18" ry="13" fill="#7ab860" /><ellipse cx="1436" cy="176" rx="33" ry="23" fill="#5f9a48" /><ellipse cx="1589" cy="299" rx="30" ry="21" fill="#6aa852" /><ellipse cx="1648" cy="198" rx="17" ry="12" fill="#6aa852" /><ellipse cx="1535" cy="259" rx="33" ry="23" fill="#7ab860" /><ellipse cx="1852" cy="161" rx="19" ry="13" fill="#8cc270" /><ellipse cx="1322" cy="161" rx="22" ry="15" fill="#8cc270" /><ellipse cx="1610" cy="271" rx="21" ry="15" fill="#8cc270" /><ellipse cx="1605" cy="336" rx="32" ry="23" fill="#6aa852" /><ellipse cx="1888" cy="243" rx="20" ry="14" fill="#6aa852" /><ellipse cx="1331" cy="191" rx="33" ry="23" fill="#7ab860" /><ellipse cx="1787" cy="194" rx="26" ry="18" fill="#6aa852" /><ellipse cx="1574" cy="345" rx="18" ry="13" fill="#7ab860" /><ellipse cx="1598" cy="220" rx="15" ry="10" fill="#8cc270" /><ellipse cx="1653" cy="159" rx="21" ry="14" fill="#5f9a48" /><ellipse cx="1808" cy="247" rx="19" ry="13" fill="#8cc270" /><ellipse cx="1689" cy="273" rx="15" ry="11" fill="#5f9a48" /><ellipse cx="1256" cy="172" rx="25" ry="17" fill="#7ab860" /><ellipse cx="1737" cy="324" rx="24" ry="17" fill="#6aa852" /><ellipse cx="1876" cy="155" rx="34" ry="24" fill="#5f9a48" /><ellipse cx="1892" cy="295" rx="20" ry="14" fill="#4a8438" /><ellipse cx="1274" cy="204" rx="14" ry="10" fill="#7ab860" /><ellipse cx="1652" cy="240" rx="25" ry="17" fill="#4a8438" /><ellipse cx="1727" cy="229" rx="28" ry="20" fill="#5f9a48" /><ellipse cx="1714" cy="344" rx="27" ry="19" fill="#4a8438" /><ellipse cx="1243" cy="351" rx="23" ry="16" fill="#8cc270" /><ellipse cx="1456" cy="259" rx="19" ry="13" fill="#4a8438" /><ellipse cx="1750" cy="310" rx="28" ry="20" fill="#6aa852" /><ellipse cx="1679" cy="234" rx="19" ry="13" fill="#8cc270" /><ellipse cx="1802" cy="233" rx="26" ry="18" fill="#8cc270" /><ellipse cx="1829" cy="231" rx="15" ry="10" fill="#5f9a48" /><ellipse cx="1453" cy="268" rx="22" ry="15" fill="#8cc270" /><ellipse cx="1601" cy="177" rx="24" ry="16" fill="#6aa852" /><ellipse cx="1322" cy="164" rx="30" ry="21" fill="#5f9a48" /><ellipse cx="1584" cy="283" rx="19" ry="13" fill="#7ab860" /><ellipse cx="224" cy="203" rx="33" ry="23" fill="#5f9a48" /><ellipse cx="131" cy="174" rx="15" ry="10" fill="#5f9a48" /><ellipse cx="241" cy="194" rx="21" ry="15" fill="#5f9a48" /><ellipse cx="295" cy="305" rx="30" ry="21" fill="#5f9a48" /><ellipse cx="211" cy="285" rx="14" ry="10" fill="#5f9a48" /><ellipse cx="261" cy="219" rx="33" ry="23" fill="#5f9a48" /><ellipse cx="177" cy="341" rx="14" ry="10" fill="#5f9a48" /><ellipse cx="296" cy="170" rx="25" ry="18" fill="#5f9a48" /><ellipse cx="191" cy="357" rx="30" ry="21" fill="#5f9a48" /><ellipse cx="296" cy="340" rx="23" ry="16" fill="#5f9a48" /><ellipse cx="1100" cy="260" rx="90" ry="60" fill="#a8d078" /><ellipse cx="1165" cy="250" rx="22" ry="120" fill="#dfe8d8" /><ellipse cx="460" cy="330" rx="110" ry="40" fill="#3f7a30" /><ellipse cx="560" cy="170" rx="180" ry="30" fill="#4c8a38" /><ellipse cx="655" cy="290" rx="100" ry="85" fill="#94684e" /><ellipse cx="660" cy="270" rx="40" ry="25" fill="#c08a6a" /><ellipse cx="85" cy="250" rx="50" ry="55.00000000000001" fill="#e06470" /><ellipse cx="1400" cy="155" rx="30" ry="33.0" fill="#e06470" /><ellipse cx="1530" cy="175" rx="20" ry="22.0" fill="#e06470" /><ellipse cx="1650" cy="282" rx="24" ry="26.400000000000002" fill="#e06470" /><ellipse cx="1400" cy="312" rx="30" ry="33.0" fill="#e06470" /><ellipse cx="905" cy="150" rx="18" ry="19.8" fill="#e06470" /><ellipse cx="1800" cy="350" rx="14" ry="15.400000000000002" fill="#e06470" /><ellipse cx="2080" cy="180" rx="140" ry="40" fill="#c4e2f6" /><ellipse cx="2060" cy="290" rx="40" ry="14" fill="#bcdcf4" /></g></svg>
</div>
<div style="left:1055.8px;top:149px;width:154.2px;height:25.2px;background:#0070f5;"></div>
<span style="left:1062.56px;top:156px;font-size:16.6px;color:#ffffff;letter-spacing:0.333px;">CoordinatorLayout</span>
<div style="left:1597px;top:200px;width:20px;height:807px;background:#e0e0e0;"></div>
<div style="left:791px;top:1081.5px;width:695px;height:20.5px;background:rgba(0,0,0,0.095);"></div>
<div style="left:1547px;top:780.5px;width:55.8px;height:59.5px;background:#ffffff;border:2px solid #c9c9c9;border-radius:7px;box-sizing:border-box;"></div>
<div style="left:1547px;top:848px;width:55.8px;height:59.5px;background:#ffffff;border:2px solid #c9c9c9;border-radius:7px;box-sizing:border-box;"></div>
<div style="left:1547px;top:916px;width:55.8px;height:163.5px;background:#ffffff;border:2px solid #c9c9c9;border-radius:7px;box-sizing:border-box;"></div>
<svg style="left:1560px;top:795.5px;" width="29" height="29" viewBox="0 0 24 24"><path fill="#4b4b4b" d="M23 5.5V20c0 2.2-1.8 4-4 4h-7.3c-1.08 0-2.1-.43-2.85-1.19L1 14.83s1.26-1.23 1.3-1.25c.22-.19.49-.29.79-.29.22 0 .42.06.6.16.04.01 4.31 2.46 4.31 2.46V4c0-.83.67-1.5 1.5-1.5S11 3.17 11 4v7h1V1.5c0-.83.67-1.5 1.5-1.5S15 .67 15 1.5V11h1V2.5c0-.83.67-1.5 1.5-1.5s1.5.67 1.5 1.5V11h1V5.5c0-.83.67-1.5 1.5-1.5s1.5.67 1.5 1.5z"/></svg>
<svg style="left:1561px;top:865px;" width="28" height="26" viewBox="0 0 28 26"><path d="M2.3 6 V20 M6.5 4.5 V21.5" stroke="#4b4b4b" stroke-width="1.9"/><path d="M11.3 2.6 L25.3 5.6 V20.4 L11.3 23.4 Z" fill="none" stroke="#4b4b4b" stroke-width="2.2"/></svg>
<div style="left:1565px;top:944px;width:20px;height:4px;background:#4d4d4d;"></div>
<div style="left:1573px;top:936px;width:4px;height:20px;background:#4d4d4d;"></div>
<div style="left:1565px;top:996px;width:20px;height:4px;background:#4d4d4d;"></div>
<svg style="left:1560.5px;top:1038px;" width="29" height="25" viewBox="0 0 29 25"><rect x="1.3" y="1.3" width="25.4" height="21.4" fill="none" stroke="#c2c2c2" stroke-width="2.6"/><path d="M7 11.4 V7 H11.6 M21.6 12.6 V17.4 H16.6" fill="none" stroke="#bcbcbc" stroke-width="2.2"/></svg>
<div style="left:1617px;top:105px;width:1px;height:997px;background:#bdbdbd;"></div>
<div style="left:1618px;top:105px;width:690.5px;height:997px;background:#fdfdfd;"></div>
<div style="left:1618px;top:105px;width:690.5px;height:50px;background:#fbfbfb;"></div>
<div style="left:1618px;top:155px;width:690.5px;height:1px;background:#cdcdcd;"></div>
<svg style="left:1631.5px;top:120.3px;" width="30" height="22" viewBox="0 0 30 22"><g fill="#8a9ba9"><rect x="0" y="0" width="28.2" height="10"/><rect x="0" y="12" width="6" height="7.8"/><rect x="8" y="12" width="12.3" height="7.8"/><rect x="22" y="12" width="6.2" height="7.8"/></g></svg>
<span style="left:1665.02px;top:115px;font-size:29px;color:#000;letter-spacing:0.226px;">coordinator_layout</span>
<span style="left:2054.03px;top:115px;font-size:29px;color:#c3c3c3;letter-spacing:0.223px;">CoordinatorLayout</span>
<div style="left:1618px;top:156px;width:663.5px;height:163px;background:#ffffff;"></div>
<div style="left:2288.5px;top:156px;width:20.2px;height:175px;background:#e2e2e2;"></div>
<span style="left:1648.12px;top:171px;font-size:24.7px;color:#000;">x</span>
<span style="left:1893.17px;top:168px;font-size:29px;color:#000;">0</span>
<div style="left:1882.7px;top:165px;width:2px;height:36.0px;background:#e3e3e3;"></div>
<div style="left:1618px;top:201.75px;width:663px;height:1.5px;background:#e3e3e3;"></div>
<span style="left:1648.34px;top:210px;font-size:24.7px;color:#000;">y</span>
<span style="left:1893.17px;top:207px;font-size:29px;color:#000;">0</span>
<div style="left:1882.7px;top:204px;width:2px;height:36.0px;background:#e3e3e3;"></div>
<div style="left:1618px;top:240.75px;width:663px;height:1.5px;background:#e3e3e3;"></div>
<span style="left:1648.44px;top:250px;font-size:24.7px;color:#000;letter-spacing:0.794px;">width</span>
<span style="left:1892.09px;top:246px;font-size:29px;color:#000;letter-spacing:0.442px;">1440</span>
<div style="left:1882.7px;top:243px;width:2px;height:36.0px;background:#e3e3e3;"></div>
<div style="left:1618px;top:279.75px;width:663px;height:1.5px;background:#e3e3e3;"></div>
<span style="left:1646.69px;top:289px;font-size:24.7px;color:#000;letter-spacing:0.526px;">height</span>
<span style="left:1892.84px;top:285px;font-size:29px;color:#000;letter-spacing:0.300px;">2792</span>
<div style="left:1882.7px;top:282px;width:2px;height:36.0px;background:#e3e3e3;"></div>
<div style="left:1618px;top:319.05px;width:663px;height:1.5px;background:#e3e3e3;"></div>
<div style="left:1618px;top:327.3px;width:663px;height:51.5px;background:#f4f4f4;"></div>
<div style="left:1618px;top:326.55px;width:663px;height:1.5px;background:#cdcdcd;"></div>
<div style="left:1618px;top:378.05px;width:663px;height:1.5px;background:#cdcdcd;"></div>
<svg style="left:1632px;top:344.5px;" width="18" height="16" viewBox="0 0 18 16"><path d="M0 0 H17.8 L8.9 15.5 Z" fill="#a3a3a3"/></svg>
<span style="left:1655.13px;top:338px;font-size:29px;color:#000;font-weight:700;transform:scaleX(0.9637);transform-origin:0 0;">Declared Attributes</span>
<span style="left:1644.85px;top:392px;font-size:24.7px;color:#000;letter-spacing:0.342px;">fitsSystemWindows</span>
<span style="left:1897.06px;top:388px;font-size:29px;color:#000;letter-spacing:0.164px;">true</span>
<svg style="left:1622px;top:397.5px;" width="16" height="18" viewBox="0 0 16 18"><path d="M0 0 V18 L15.5 9 Z" fill="#a3a3a3"/></svg>
<div style="left:1882.7px;top:381.5px;width:2px;height:44.5px;background:#e3e3e3;"></div>
<div style="left:1618px;top:426.75px;width:663px;height:1.5px;background:#e3e3e3;"></div>
<span style="left:1643.55px;top:440px;font-size:24.7px;color:#000;">id</span>
<span style="left:1895.22px;top:436px;font-size:29px;color:#000;letter-spacing:0.287px;">@id/coordinator_layout</span>
<svg style="left:1622px;top:445.2px;" width="16" height="18" viewBox="0 0 16 18"><path d="M0 0 V18 L15.5 9 Z" fill="#a3a3a3"/></svg>
<div style="left:1882.7px;top:430px;width:2px;height:44px;background:#e3e3e3;"></div>
<div style="left:1618px;top:474.75px;width:663px;height:1.5px;background:#e3e3e3;"></div>
<div style="left:1618px;top:483.75px;width:663px;height:51.75px;background:#f4f4f4;"></div>
<div style="left:1618px;top:483.0px;width:663px;height:1.5px;background:#cdcdcd;"></div>
<div style="left:1618px;top:534.75px;width:663px;height:1.5px;background:#cdcdcd;"></div>
<svg style="left:1632px;top:500.25px;" width="18" height="16" viewBox="0 0 18 16"><path d="M0 0 H17.8 L8.9 15.5 Z" fill="#a3a3a3"/></svg>
<span style="left:1655.17px;top:494px;font-size:29px;color:#000;font-weight:700;transform:scaleX(0.9432);transform-origin:0 0;">Layout</span>
<span style="left:1643.54px;top:548px;font-size:24.7px;color:#000;letter-spacing:0.320px;">layout_width</span>
<span style="left:1895.57px;top:544px;font-size:29px;color:#000;letter-spacing:-0.063px;">match_parent</span>
<div style="left:1882.7px;top:538.25px;width:2px;height:43.5px;background:#e3e3e3;"></div>
<div style="left:1618px;top:582.5px;width:663px;height:1.5px;background:#e3e3e3;"></div>
<span style="left:1643.54px;top:596px;font-size:24.7px;color:#000;letter-spacing:0.102px;">layout_height</span>
<span style="left:1895.57px;top:592px;font-size:29px;color:#000;letter-spacing:-0.063px;">match_parent</span>
<div style="left:1882.7px;top:586.25px;width:2px;height:43.5px;background:#e3e3e3;"></div>
<div style="left:1618px;top:630.5px;width:663px;height:1.5px;background:#e3e3e3;"></div>
<span style="left:1643.54px;top:644px;font-size:24.7px;color:#000;letter-spacing:0.049px;">layout_gravity</span>
<span style="left:1896.27px;top:640px;font-size:29px;color:#000;letter-spacing:0.055px;">clip_horizontal|clip_vertical|fil</span>
<div style="left:1882.7px;top:634.25px;width:2px;height:43.5px;background:#e3e3e3;"></div>
<div style="left:1618px;top:678.5px;width:663px;height:1.5px;background:#e3e3e3;"></div>
<span style="left:1643.54px;top:692px;font-size:24.7px;color:#000;letter-spacing:0.262px;">layout_marginLeft</span>
<span style="left:1896.37px;top:688px;font-size:29px;color:#000;">0</span>
<div style="left:1882.7px;top:682.25px;width:2px;height:43.5px;background:#e3e3e3;"></div>
<div style="left:1618px;top:726.5px;width:663px;height:1.5px;background:#e3e3e3;"></div>
<span style="left:1643.54px;top:740px;font-size:24.7px;color:#000;letter-spacing:0.428px;">layout_marginTop</span>
<span style="left:1896.37px;top:736px;font-size:29px;color:#000;">0</span>
<div style="left:1882.7px;top:730.25px;width:2px;height:43.5px;background:#e3e3e3;"></div>
<div style="left:1618px;top:774.5px;width:663px;height:1.5px;background:#e3e3e3;"></div>
<span style="left:1643.54px;top:788px;font-size:24.7px;color:#000;letter-spacing:0.079px;">layout_marginRight</span>
<span style="left:1896.37px;top:784px;font-size:29px;color:#000;">0</span>
<div style="left:1882.7px;top:778.25px;width:2px;height:43.5px;background:#e3e3e3;"></div>
<div style="left:1618px;top:822.5px;width:663px;height:1.5px;background:#e3e3e3;"></div>
<span style="left:1643.54px;top:836px;font-size:24.7px;color:#000;letter-spacing:0.295px;">layout_marginBott...</span>
<span style="left:1896.37px;top:832px;font-size:29px;color:#000;">0</span>
<div style="left:1882.7px;top:826.25px;width:2px;height:43.5px;background:#e3e3e3;"></div>
<div style="left:1618px;top:870.5px;width:663px;height:1.5px;background:#e3e3e3;"></div>
<div style="left:2262px;top:640px;width:19px;height:36px;background:linear-gradient(90deg, rgba(253,253,253,0), #fdfdfd 60%);"></div>
<div style="left:1618px;top:879.5px;width:663px;height:51.75px;background:#f4f4f4;"></div>
<div style="left:1618px;top:878.75px;width:663px;height:1.5px;background:#cdcdcd;"></div>
<div style="left:1618px;top:930.5px;width:663px;height:1.5px;background:#cdcdcd;"></div>
<svg style="left:1632px;top:896.25px;" width="18" height="16" viewBox="0 0 18 16"><path d="M0 0 H17.8 L8.9 15.5 Z" fill="#a3a3a3"/></svg>
<span style="left:1656.30px;top:890px;font-size:29px;color:#000;font-weight:700;transform:scaleX(0.9661);transform-origin:0 0;">All Attributes</span>
<span style="left:1644.15px;top:944px;font-size:24.7px;color:#000;letter-spacing:0.302px;">accessibilityFocused</span>
<span style="left:1897.09px;top:940px;font-size:29px;color:#000;letter-spacing:0.296px;">false</span>
<div style="left:1882.7px;top:934.25px;width:2px;height:43.5px;background:#e3e3e3;"></div>
<div style="left:1618px;top:978.5px;width:663px;height:1.5px;background:#e3e3e3;"></div>
<span style="left:1644.15px;top:992px;font-size:24.7px;color:#000;letter-spacing:0.367px;">accessibilityHeading</span>
<span style="left:1897.09px;top:988px;font-size:29px;color:#000;letter-spacing:0.296px;">false</span>
<div style="left:1882.7px;top:982.25px;width:2px;height:43.5px;background:#e3e3e3;"></div>
<div style="left:1618px;top:1026.5px;width:663px;height:1.5px;background:#e3e3e3;"></div>
<span style="left:1644.15px;top:1040px;font-size:24.7px;color:#000;letter-spacing:0.079px;">accessibilityLiveRe...</span>
<span style="left:1895.57px;top:1036px;font-size:29px;color:#000;letter-spacing:0.233px;">none</span>
<div style="left:1882.7px;top:1030.25px;width:2px;height:43.5px;background:#e3e3e3;"></div>
<div style="left:1618px;top:1074.5px;width:663px;height:1.5px;background:#e3e3e3;"></div>
<span style="left:1644.15px;top:1088px;font-size:24.7px;color:#000;letter-spacing:0.479px;">activated</span>
<span style="left:1897.09px;top:1084px;font-size:29px;color:#000;letter-spacing:0.296px;">false</span>
<div style="left:1882.7px;top:1078.25px;width:2px;height:43.5px;background:#e3e3e3;"></div>
<div style="left:1618px;top:1122.5px;width:663px;height:1.5px;background:#e3e3e3;"></div>
<div style="left:0px;top:1102px;width:2318px;height:44px;background:#f2f2f2;"></div>
<div style="left:0px;top:1101.5px;width:2318px;height:1.2px;background:#c8c8c8;"></div>
<svg style="left:23px;top:1115px;" width="17" height="20" viewBox="0 0 17 20"><path d="M0 0 V19.5 L15.8 9.75 Z" fill="#4b4b4b"/></svg>
<svg style="left:36.5px;top:1129.8px;" width="10" height="10" viewBox="0 0 10 10"><circle cx="4.8" cy="4.6" r="4.5" fill="#1fd11f"/></svg>
<span style="left:48.96px;top:1114px;font-size:24.7px;color:#000;transform:scaleX(0.9528);transform-origin:0 0;">4: Run</span>
<div style="left:49.5px;top:1135.7px;width:13px;height:1.5px;background:#000;"></div>
<svg style="left:160.75px;top:1116.2px;" width="20" height="17" viewBox="0 0 20 17"><g fill="#4b4b4b"><rect x="0" y="0.0" width="3.8" height="3.6"/><rect x="6" y="0.0" width="13.8" height="3.6"/><rect x="0" y="6.3" width="3.8" height="3.6"/><rect x="6" y="6.3" width="13.8" height="3.6"/><rect x="0" y="12.6" width="3.8" height="3.6"/><rect x="6" y="12.6" width="13.8" height="3.6"/></g></svg>
<span style="left:187.50px;top:1114px;font-size:24.7px;color:#000;transform:scaleX(0.9076);transform-origin:0 0;">TODO</span>
<svg style="left:300.5px;top:1114px;" width="21" height="22" viewBox="0 0 21 22"><path d="M2 0 V21.8" stroke="#4b4b4b" stroke-width="3.6" fill="none"/><path d="M3 15.2 H13.4 V6" stroke="#4b4b4b" stroke-width="3.4" fill="none"/><path d="M6.6 8.6 L13.4 1.2 L20.2 8.6 Z" fill="#4b4b4b"/></svg>
<span style="left:325.84px;top:1114px;font-size:24.7px;color:#000;letter-spacing:0.078px;">9: Version Control</span>
<div style="left:327px;top:1135.7px;width:13.5px;height:1.5px;background:#000;"></div>
<svg style="left:567.5px;top:1116px;" width="30" height="18" viewBox="0 0 30 18"><circle cx="14.5" cy="15.1" r="11" fill="none" stroke="#4b4b4b" stroke-width="4.2"/><g stroke="#f2f2f2" stroke-width="2" fill="#4b4b4b" paint-order="stroke"><path d="M11.9 14.0 L21.9 3.2 L17.5 16.6 Z"/><circle cx="14.7" cy="15.2" r="3"/></g></svg>
<span style="left:598.17px;top:1114px;font-size:24.7px;color:#000;letter-spacing:0.419px;">Profiler</span>
<svg style="left:722.8px;top:1117.6px;" width="23" height="17" viewBox="0 0 23 17"><g fill="#4b4b4b"><rect x="0" y="0" width="22" height="3.6"/><rect x="0" y="6.2" width="14" height="3.6"/><rect x="0" y="12.4" width="18" height="3.6"/></g></svg>
<span style="left:750.55px;top:1114px;font-size:24.7px;color:#000;letter-spacing:0.007px;">6: Logcat</span>
<div style="left:751.8px;top:1135.7px;width:12.6px;height:1.5px;background:#000;"></div>
<svg style="left:893.5px;top:1113px;" width="27" height="23" viewBox="0 0 27 23"><g fill="#4b4b4b"><path d="M1 7.5 L8.5 1 L16 3.2 L10.8 8.4 L8 7 L4.5 10.5 Z"/><path d="M9.6 9.4 L13.4 6 L26 19 L22.2 22.6 Z"/></g></svg>
<span style="left:923.07px;top:1114px;font-size:24.7px;color:#000;letter-spacing:0.653px;">Build</span>
<svg style="left:1022.3px;top:1114.3px;" width="22" height="20" viewBox="0 0 22 20"><rect x="0" y="0" width="21.6" height="19.3" rx="1" fill="#4b4b4b"/><path d="M3.6 5 L8.2 9 L3.6 13" stroke="#f2f2f2" stroke-width="2" fill="none"/><rect x="9.6" y="13.2" width="7" height="1.9" fill="#f2f2f2"/></svg>
<span style="left:1050.25px;top:1114px;font-size:24.7px;color:#000;letter-spacing:0.673px;">Terminal</span>
<svg style="left:1883.5px;top:1112px;" width="27" height="27" viewBox="0 0 27 27"><path d="M13.2 0 A13.2 13.2 0 1 0 13.2 26.4 H26.4 V13.2 A13.2 13.2 0 0 0 13.2 0 Z" fill="#33a650"/></svg>
<span style="left:1891.31px;top:1117px;font-size:19.5px;color:#ffffff;">1</span>
<span style="left:1913.47px;top:1114px;font-size:24.7px;color:#000;letter-spacing:-0.321px;">Event Log</span>
<div style="left:2043px;top:1102.6px;width:265.7px;height:43.4px;background:#c4c4c4;"></div>
<svg style="left:2068.5px;top:1111.5px;" width="28" height="25" viewBox="0 0 28 25"><g fill="none" stroke="#4b4b4b" stroke-width="1.9"><path d="M1 12 V1 H17"/><path d="M5.5 16.5 V5.5 H22.5 V8"/><circle cx="16.2" cy="14.4" r="4.6" stroke-width="2.3"/><path d="M19.6 17.8 L26 24" stroke-width="3"/><path d="M5.5 16.5 H10"/></g></svg>
<span style="left:2098.97px;top:1114px;font-size:24.7px;color:#000;letter-spacing:0.210px;">Layout Inspector</span>
<div style="left:788px;top:46px;width:1275.5px;height:60px;background:#f4f4f4;box-sizing:border-box;border:1px solid #b3b3b3;border-right:1.6px solid #111;box-shadow:0 9px 22px -3px rgba(0,0,0,0.44);"></div>
<div style="left:811px;top:74px;width:20px;height:4px;background:#4d4d4d;"></div>
<div style="left:819px;top:66px;width:4px;height:20px;background:#4d4d4d;"></div>
<span style="left:840.43px;top:62px;font-size:29px;color:#000;letter-spacing:-0.254px;">Select Process</span>
<svg style="left:1038px;top:70px;" width="18" height="14" viewBox="0 0 18 14"><path d="M1.8 2.4 L9 10.2 L16.2 2.4" fill="none" stroke="#7f8b99" stroke-width="2.6"/></svg>
<div style="left:1072.6px;top:56px;width:1.1px;height:38px;background:#cfcfcf;"></div>
<div style="left:1191px;top:56px;width:1.1px;height:38px;background:#cfcfcf;"></div>
<div style="left:1430.8px;top:56px;width:1.1px;height:38px;background:#cfcfcf;"></div>
<svg style="left:1091px;top:60.4px;" width="31.2" height="31.2" viewBox="0 0 24 24"><path fill="#4b4b4b" d="M12 4.5C7 4.5 2.73 7.61 1 12c1.73 4.39 6 7.5 11 7.5s9.270-3.110 11-7.5c-1.730-4.390-6-7.500-11-7.500zM12 17c-2.760 0-5-2.240-5-5s2.240-5 5-5 5 2.240 5 5-2.240 5-5 5zm0-8c-1.660 0-3 1.340-3 3s1.340 3 3 3 3-1.340 3-3-1.340-3-3-3z"/></svg>
<svg style="left:1113px;top:88px;" width="12" height="7" viewBox="0 0 12 7"><path d="M0 0 H11.6 L5.8 6.2 Z" fill="#111"/></svg>
<svg style="left:1146px;top:63.5px;" width="28" height="27" viewBox="0 0 28 27"><g fill="none" stroke="#4b4b4b" stroke-width="2"><path d="M1.9 18.2 V1.5 H18.9"/><path d="M21.9 12.3 V5.5 H6.1 V21.4 H12.8"/></g><path d="M15.3 20.4 L20.9 14.6 L26.8 20.4 Z" fill="#4b4b4b"/><rect x="18.9" y="20" width="4.2" height="6.3" fill="#4b4b4b"/></svg>
<svg style="left:1205px;top:61px;" width="28" height="28" viewBox="0 0 28 28"><rect width="28" height="28" rx="4.5" fill="#2977d4"/><path d="M6.8 14.5 L11.9 20.3 L22.2 5.9" fill="none" stroke="#fff" stroke-width="3.3" stroke-linecap="round" stroke-linejoin="round"/></svg>
<span style="left:1243.87px;top:62px;font-size:29px;color:#000;letter-spacing:-0.140px;">Live updates</span>
<span style="left:1447.12px;top:62px;font-size:29px;color:#767676;letter-spacing:-0.130px;">Layer Spacing:</span>
<div style="left:1665.5px;top:72px;width:363px;height:6px;background:#d3d3d3;"></div>
<svg style="left:1759px;top:57px;" width="33" height="40" viewBox="0 0 33 40"><path d="M4 1.6 H28.4 Q31 1.6 31 4.2 V21.5 L16.2 37.4 L1.4 21.5 V4.2 Q1.4 1.6 4 1.6 Z" fill="#f3f3f3" stroke="#d4d4d4" stroke-width="1.7"/></svg>
<div style="left:2308.7px;top:0px;width:9.3px;height:1146px;background:#f3f3f3;"></div>
<div style="left:2308.7px;top:0px;width:1px;height:1102px;background:#c9c9c9;"></div>
</body></html>
